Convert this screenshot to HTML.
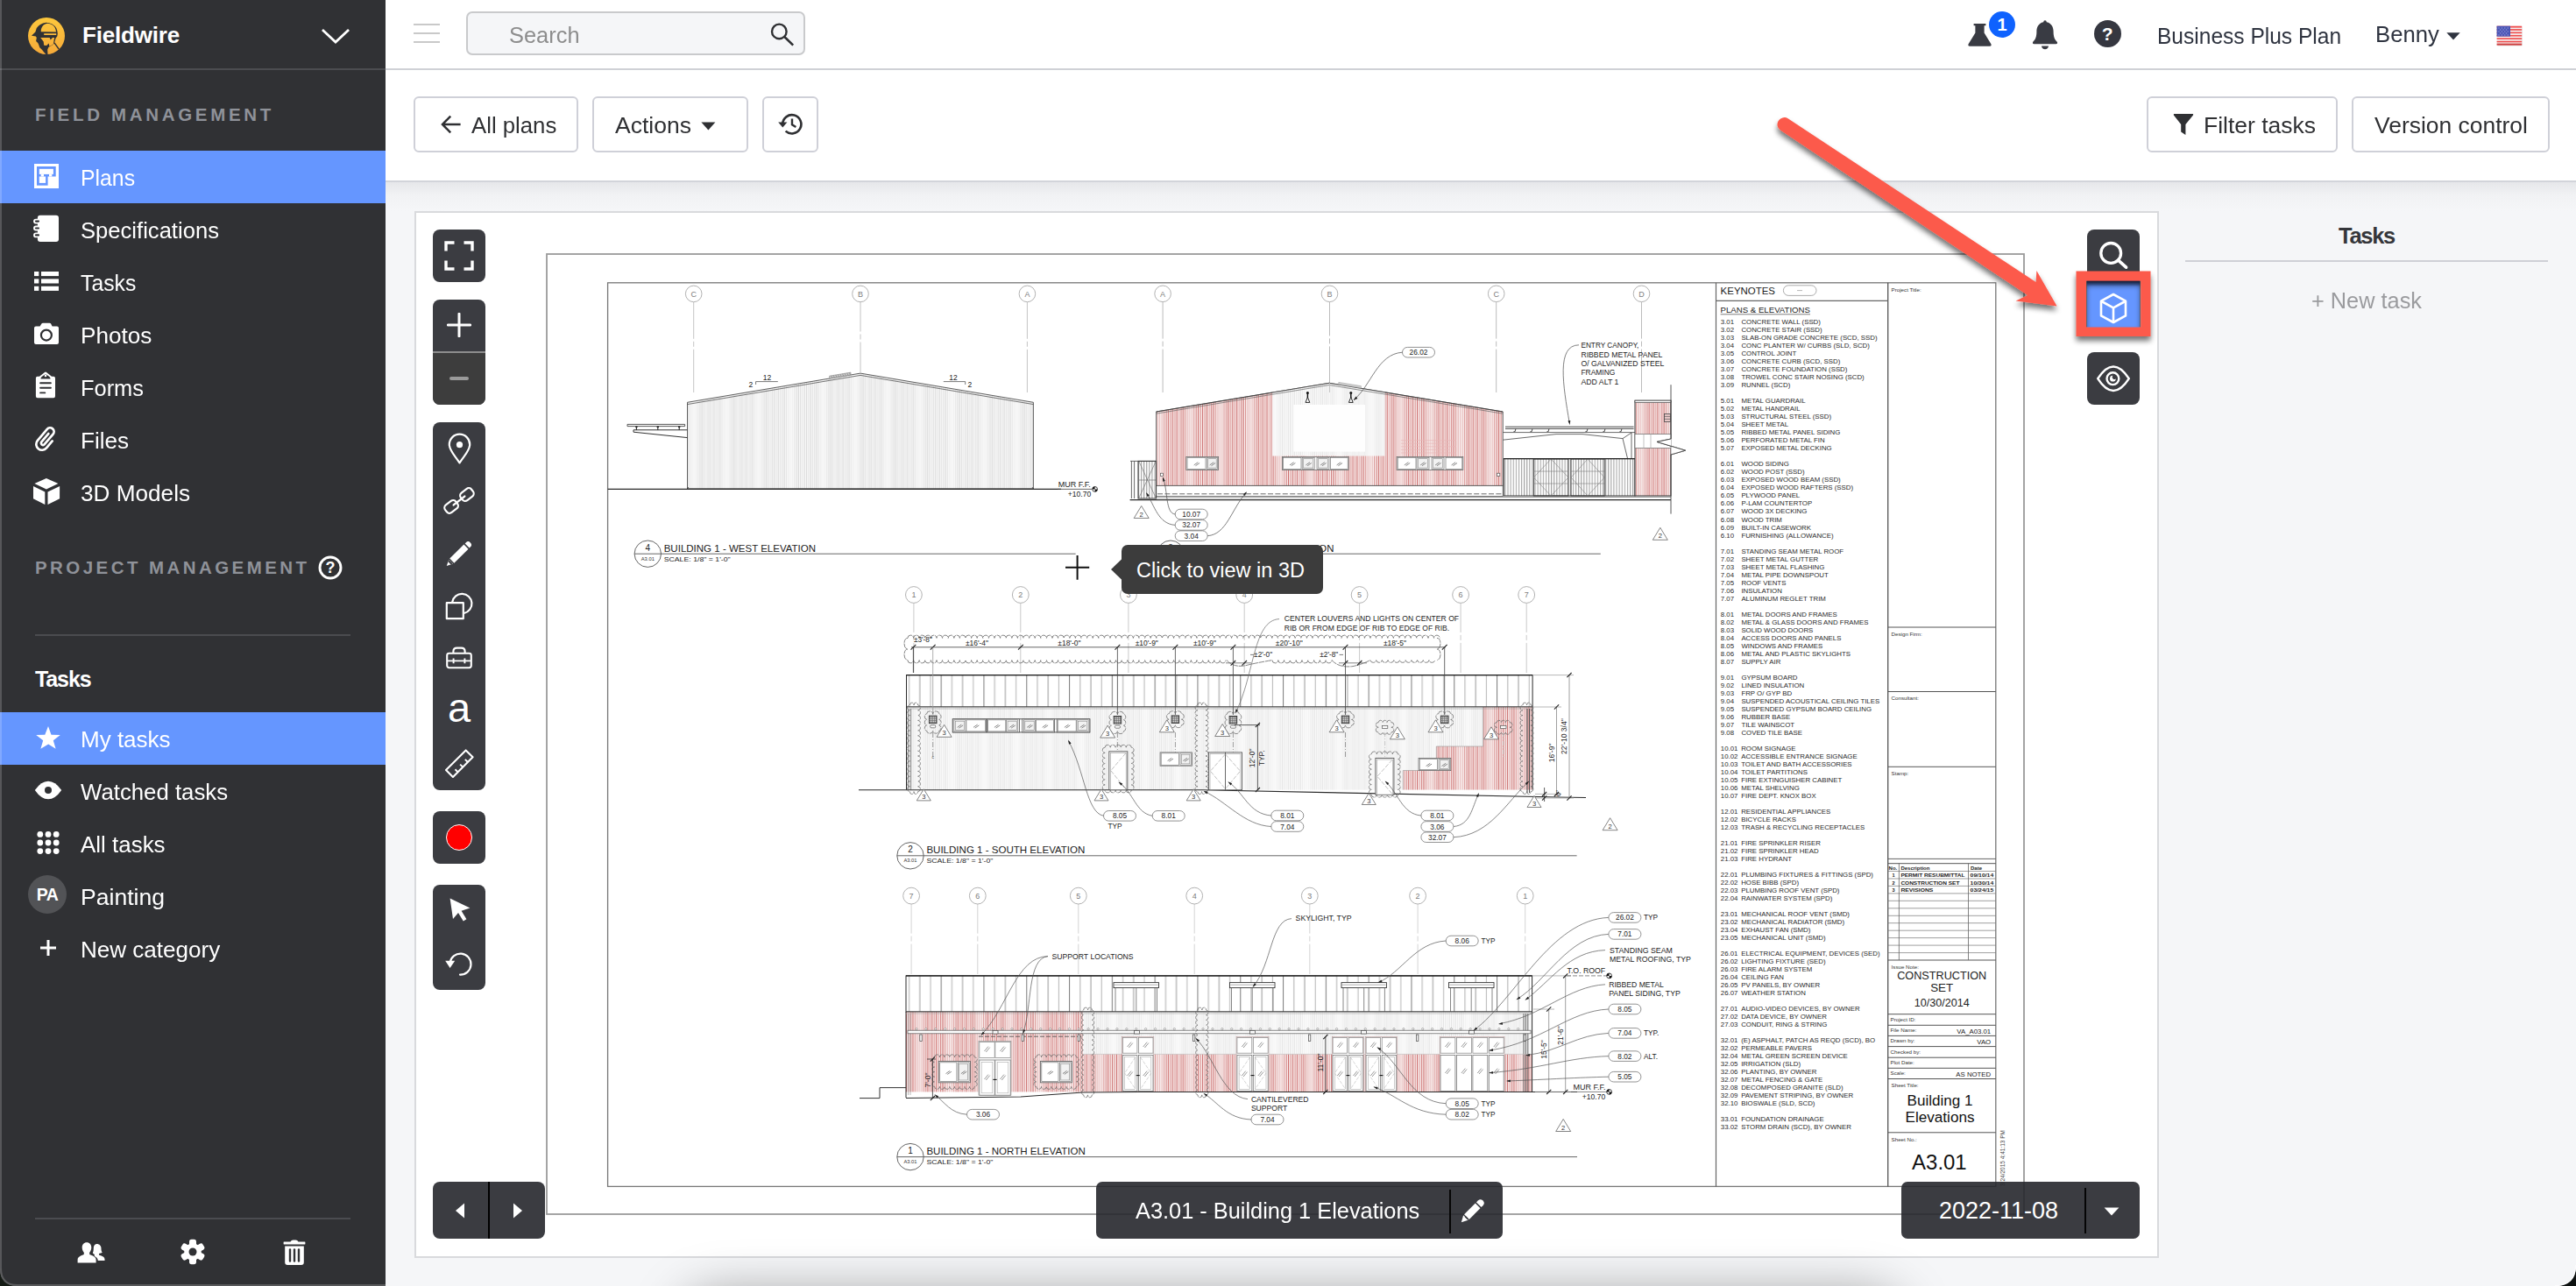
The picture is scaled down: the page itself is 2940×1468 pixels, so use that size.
<!DOCTYPE html>
<html>
<head>
<meta charset="utf-8">
<title>Fieldwire</title>
<style>
*{box-sizing:border-box;margin:0;padding:0}
html,body{width:2940px;height:1468px;overflow:hidden;background:#f5f6f8;font-family:"Liberation Sans",sans-serif;}
.abs{position:absolute}
#side{position:absolute;left:0;top:0;width:440px;height:1468px;background:#303134;color:#fff;overflow:hidden}
#side .hdrline{position:absolute;left:0;top:78px;width:440px;height:2px;background:#4b4c50}
#side .brand{position:absolute;left:94px;top:22px;font-size:26px;font-weight:bold;line-height:36px;letter-spacing:-0.2px}
.seclabel{position:absolute;left:40px;font-size:20.5px;font-weight:bold;letter-spacing:3.55px;color:#8f9299;line-height:24px;white-space:nowrap}
.row{position:absolute;left:0;width:440px;height:60px}
.row.act{background:#6596ff}
.row .t{position:absolute;left:92px;top:14.9px;font-size:26.5px;line-height:32px;white-space:nowrap;color:#fff;transform-origin:0 50%}
.row svg{position:absolute}
.sdiv{position:absolute;left:40px;width:360px;height:2px;background:#4b4c50}
#top{position:absolute;left:440px;top:0;width:2500px;height:80px;background:#fff;border-bottom:2px solid #cfd1d6}
#bar{position:absolute;left:440px;top:80px;width:2500px;height:128px;background:#fff;border-bottom:2px solid #d2d4da}
#barshadow{position:absolute;left:440px;top:208px;width:2500px;height:33px;background:linear-gradient(#e6e7ea,#f1f2f4 45%,#f5f6f8)}
.btn{position:absolute;top:110px;height:64px;border:2px solid #cfd0d8;border-radius:6px;background:#fff;color:#2f3033;font-size:26px;line-height:60px;white-space:nowrap}
.btn span{position:absolute;top:0}
#viewer{position:absolute;left:473px;top:241px;width:1991px;height:1195px;background:#fff;border:2px solid #d9dadd;overflow:hidden}
.tool{position:absolute;background:#3b3c41;border-radius:8px}
.toptxt{position:absolute;font-size:27px;color:#2f3033;line-height:34px;white-space:nowrap}
</style>
</head>
<body>
<!-- ============ SIDEBAR ============ -->
<div id="side">
  
  <!-- logo -->
  <svg class="abs" style="left:32px;top:20px" width="42" height="42" viewBox="0 0 42 42">
    <defs><linearGradient id="lg" gradientUnits="userSpaceOnUse" x1="0" y1="0" x2="0" y2="42"><stop offset="0" stop-color="#fdc83c"/><stop offset="1" stop-color="#f5a93a"/></linearGradient></defs>
    <circle cx="21" cy="21" r="21" fill="url(#lg)"/>
    <path d="M4 20.8 L8.4 16.6 L9.8 12.1 Q11.6 9.2 14 7.9 Q17 6.1 20.5 5.8 Q24.4 5.9 27.5 7.5 Q30.6 9.4 32.2 12.1 Q33.6 15 33.8 18.2 L33.4 21.2 L31.5 23.8 L30.1 28.9 L28.9 30.8 L23.3 34 L22.2 36.8 L22.5 42.3 L20.3 42 L15.9 36.8 L13.3 34.3 L12.1 30.8 L11.2 28.9 L9.1 27 L9.8 22.9 L8.9 21.5 Z" fill="#303134"/>
    <path d="M30 28.8 L35.2 36" stroke="#303134" stroke-width="1.4" fill="none"/>
    <path d="M14.7 16.3 Q14.7 13.6 15.4 12 Q16.4 9.7 17.8 8.4 Q20 7 22.4 6.8 Q25.2 6.9 27.5 8.2 Q29.6 9.6 30.8 11.7 Q31.8 14 32 16.6 Z" fill="url(#lg)"/>
    <path d="M18.2 18.2 H32.2 V20 H18.2 Z" fill="url(#lg)"/>
    <path d="M14.2 23.1 L24.7 22.9 L25.7 25.6 L28 22.9 L30.1 22.9 L29.6 25.7 L28.9 30.5 L24.5 33 L23.6 29.6 L21.2 32 L18.2 31.7 L17.7 27.5 Z" fill="url(#lg)"/>
  </svg>
  <div class="brand">Fieldwire</div>
  <svg class="abs" style="left:364px;top:30px" width="38" height="24" viewBox="0 0 38 24"><path d="M5 5 L19 18 L33 5" fill="none" stroke="#fff" stroke-width="2.8" stroke-linecap="square"/></svg>
  <div class="hdrline"></div>

  <div class="seclabel" style="top:119px;letter-spacing:3.68px">FIELD MANAGEMENT</div>

  <div class="row act" style="top:172px"><svg style="left:39px;top:15px" width="28" height="28" viewBox="0 0 28 28"><rect width="28" height="28" fill="#fff"/><rect x="3" y="3" width="21.7" height="21.7" fill="#6596ff"/><rect x="5.8" y="5.8" width="16.1" height="6.1" fill="#fff"/><rect x="7.7" y="11.9" width="3.3" height="2.6" fill="#fff"/><rect x="17" y="11.9" width="3.3" height="2.6" fill="#fff"/><rect x="5.8" y="14.5" width="7.3" height="7.4" fill="#fff"/><rect x="15.6" y="14.5" width="12.4" height="13.5" fill="#fff"/></svg><div class="t" style="transform:scaleX(0.936)">Plans</div></div>
  <div class="row" style="top:232px"><svg style="left:37px;top:12px" width="32" height="34" viewBox="0 0 32 34"><rect x="5.9" y="1.8" width="24.1" height="30.1" rx="3" fill="#fff"/><g fill="#303134" stroke="#fff" stroke-width="1.9"><rect x="2" y="6.6" width="7" height="4" rx="2"/><rect x="2" y="14.5" width="7" height="4" rx="2"/><rect x="2" y="22.4" width="7" height="4" rx="2"/></g></svg><div class="t" style="transform:scaleX(0.966)">Specifications</div></div>
  <div class="row" style="top:292px"><svg style="left:39px;top:18px" width="28" height="22" viewBox="0 0 28 22" fill="#fff"><rect x="0" y="0" width="5.3" height="5.1"/><rect x="8" y="0" width="20" height="5.1"/><rect x="0" y="8.4" width="5.3" height="5.1"/><rect x="8" y="8.4" width="20" height="5.1"/><rect x="0" y="16.8" width="5.3" height="5.1"/><rect x="8" y="16.8" width="20" height="5.1"/></svg><div class="t" style="transform:scaleX(0.934)">Tasks</div></div>
  <div class="row" style="top:352px"><svg style="left:39px;top:16px" width="28" height="26" viewBox="0 0 28 26"><path d="M2 4.5 H6.6 L8.4 1.6 Q8.9 0.8 9.9 0.8 H17.6 Q18.6 0.8 19.1 1.6 L20.6 4.5 H26 Q28 4.5 28 6.5 V23 Q28 25 26 25 H2 Q0 25 0 23 V6.5 Q0 4.5 2 4.5 Z" fill="#fff"/><circle cx="13.9" cy="14.6" r="6" fill="#fff" stroke="#303134" stroke-width="2.2"/></svg><div class="t" style="transform:scaleX(0.986)">Photos</div></div>
  <div class="row" style="top:412px"><svg style="left:40px;top:12px" width="24" height="32" viewBox="0 0 24 32"><path d="M0.9 7.7 Q0.9 5.8 2.8 5.8 H5 L11 0.9 Q12 0.2 13 0.9 L19 5.8 H21.1 Q23 5.8 23 7.7 V28.3 Q23 30.2 21.1 30.2 H2.8 Q0.9 30.2 0.9 28.3 Z" fill="#fff"/><path d="M6.4 8.6 Q6.4 6.8 8 5.8 L12 2.9 L16 5.8 Q17.6 6.8 17.6 8.6 Z" fill="#303134"/><circle cx="12" cy="4.9" r="1.3" fill="#fff"/><g stroke="#303134" stroke-width="1.9" stroke-linecap="round"><path d="M6.1 13.2 H17.9"/><path d="M6.1 18.8 H17.9"/><path d="M6.1 24.4 H11.3"/></g></svg><div class="t" style="transform:scaleX(0.958)">Forms</div></div>
  <div class="row" style="top:472px"><svg style="left:38px;top:14px" width="30" height="32" viewBox="0 0 30 32"><g transform="translate(14.7,15.5) rotate(40)" fill="none" stroke="#fff" stroke-width="2.7" stroke-linecap="round"><path d="M6.6 -3 V7.4 A6.6 6.6 0 0 1 -6.6 7.4 V-9.6 A4.4 4.4 0 0 1 2.2 -9.6 V5.6 A2.2 2.2 0 0 1 -2.2 5.6 V-6.6"/></g></svg><div class="t" style="transform:scaleX(0.986)">Files</div></div>
  <div class="row" style="top:532px"><svg style="left:36px;top:12px" width="34" height="34" viewBox="0 0 34 34" fill="#fff"><path d="M16.9 2 L30.4 8.1 L16.9 14.4 L3.4 8.1 Z"/><path d="M2 11.1 L15.3 17.4 V32.1 L2 25.3 Z"/><path d="M18.5 17.4 L32.1 11.1 V25.3 L18.5 32.1 Z"/></svg><div class="t" style="transform:scaleX(0.987)">3D Models</div></div>

  <div class="seclabel" style="top:636px;letter-spacing:3.43px">PROJECT MANAGEMENT</div>
  <div class="sdiv" style="top:724px"></div>
  <div class="abs" style="left:40px;top:758px;font-size:25px;font-weight:bold;line-height:34px;letter-spacing:-1.1px">Tasks</div>

  <div class="row act" style="top:813px"><svg style="left:40px;top:15px" width="30" height="28" viewBox="0 0 30 28"><path d="M15 1.1 L18.5 10.7 L28.8 10.9 L20.8 17.2 L23.6 26.8 L15.2 21.4 L6.4 26.8 L9.2 17.2 L1.2 10.9 L11.3 10.7 Z" fill="#fff"/></svg><div class="t" style="transform:scaleX(0.981)">My tasks</div></div>
  <div class="row" style="top:873px"><svg style="left:38px;top:17px" width="34" height="24" viewBox="0 0 34 24"><path d="M1.8 11.9 Q9 1.7 17 1.7 Q25 1.7 32.2 11.9 Q25 22.2 17 22.2 Q9 22.2 1.8 11.9 Z" fill="#fff"/><circle cx="17" cy="11.9" r="4" fill="#303134"/></svg><div class="t" style="transform:scaleX(0.973)">Watched tasks</div></div>
  <div class="row" style="top:933px"><svg style="left:41px;top:15px" width="28" height="28" viewBox="0 0 28 28" fill="#fff"><circle cx="4.8" cy="4.4" r="3.4"/><circle cx="14" cy="4.4" r="3.4"/><circle cx="23.2" cy="4.4" r="3.4"/><circle cx="4.8" cy="14" r="3.4"/><circle cx="14" cy="14" r="3.4"/><circle cx="23.2" cy="14" r="3.4"/><circle cx="4.8" cy="23.6" r="3.4"/><circle cx="14" cy="23.6" r="3.4"/><circle cx="23.2" cy="23.6" r="3.4"/></svg><div class="t" style="transform:scaleX(0.979)">All tasks</div></div>
  <div class="row" style="top:993px"><div class="abs" style="left:32px;top:6px;width:44px;height:44px;border-radius:22px;background:#525356;color:#fff;font-weight:bold;font-size:19.5px;line-height:44px;text-align:center;letter-spacing:-0.5px">PA</div><div class="t" style="transform:scaleX(1.003)">Painting</div></div>
  <div class="row" style="top:1053px"><svg style="left:45px;top:19px" width="20" height="20" viewBox="0 0 20 20"><path d="M10 1 V19 M1 10 H19" stroke="#fff" stroke-width="3" fill="none"/></svg><div class="t" style="transform:scaleX(0.983)">New category</div></div>

  <div class="sdiv" style="top:1390px"></div>

  <svg class="abs" style="left:362px;top:633px" width="30" height="30" viewBox="0 0 30 30"><circle cx="15" cy="15" r="12" fill="none" stroke="#fff" stroke-width="2.9"/><text x="15" y="21.3" font-family="Liberation Sans" font-weight="bold" font-size="18" fill="#fff" text-anchor="middle">?</text></svg>
  <!-- bottom icons -->
  <svg class="abs" style="left:88px;top:1417px" width="33" height="26" viewBox="0 0 33 26" fill="#fff"><path d="M22.5 3 C25.5 3 27.5 5.2 27.5 8.2 C27.5 10 27.8 11.8 28.8 12.8 C27.6 13.6 26.2 13.9 25 13.9 L25 15.5 C27.5 16.6 31.5 17.2 31.5 20.5 L31.5 22 L23.8 22 C23.6 19.2 21.6 17.9 19.8 17.1 L19.8 15 C19 14.6 18.2 14 17.8 13.2 C19 11.8 18.6 8.6 18.9 6.6 C19.4 4.4 20.6 3 22.5 3 Z"/><path d="M11 1.3 C14.3 1.3 16.3 3.8 16.3 7 C16.3 9 15.6 11.4 14.2 12.7 L14.2 15 C17.5 16.4 21.6 17.4 21.6 21 L21.6 24.4 L0.6 24.4 L0.6 21 C0.6 17.4 4.6 16.4 7.8 15 L7.8 12.7 C6.4 11.4 5.7 9 5.7 7 C5.7 3.8 7.7 1.3 11 1.3 Z"/></svg>
  <svg class="abs" style="left:205px;top:1414px" width="30" height="30" viewBox="-15 -15 30 30"><g fill="#fff"><circle r="9.8"/><rect x="-4" y="-14.2" width="8" height="8" rx="2.6" transform="rotate(0)"/><rect x="-4" y="-14.2" width="8" height="8" rx="2.6" transform="rotate(60)"/><rect x="-4" y="-14.2" width="8" height="8" rx="2.6" transform="rotate(120)"/><rect x="-4" y="-14.2" width="8" height="8" rx="2.6" transform="rotate(180)"/><rect x="-4" y="-14.2" width="8" height="8" rx="2.6" transform="rotate(240)"/><rect x="-4" y="-14.2" width="8" height="8" rx="2.6" transform="rotate(300)"/></g><circle r="4.5" fill="#303134"/></svg>
  <svg class="abs" style="left:323px;top:1414px" width="26" height="32" viewBox="0 0 26 32"><path d="M1 3.6 H8.5 Q9.5 1.4 11.5 1.4 H14.5 Q16.5 1.4 17.5 3.6 H25 Q25.4 3.6 25.4 4.4 V5.8 Q25.4 6.6 25 6.6 H1 Q0.6 6.6 0.6 5.8 V4.4 Q0.6 3.6 1 3.6 Z" fill="#fff"/><path d="M2.2 8.4 H23.8 V27 Q23.8 30 20.8 30 H5.2 Q2.2 30 2.2 27 Z" fill="#fff"/><g stroke="#303134" stroke-width="2.4" stroke-linecap="round"><path d="M8 12.5 V25.5"/><path d="M13 12.5 V25.5"/><path d="M18 12.5 V25.5"/></g></svg>
  <div class="abs" style="left:0;top:1466px;width:440px;height:2px;background:#58595b"></div>
  <div class="abs" style="left:0;top:0;width:2px;height:1468px;background:rgba(255,255,255,0.19)"></div>
</div>

<!-- ============ TOP BAR ============ -->
<div id="top">
  <!-- hamburger -->
  <div class="abs" style="left:32px;top:27px;width:30px;height:2px;background:#c9c9c9"></div>
  <div class="abs" style="left:32px;top:37px;width:30px;height:2px;background:#c9c9c9"></div>
  <div class="abs" style="left:32px;top:47px;width:30px;height:2px;background:#c9c9c9"></div>
  <!-- search -->
  <div class="abs" style="left:92px;top:13px;width:387px;height:50px;border:2px solid #c9cacc;border-radius:7px;background:#f5f6f8"></div>
  <div class="abs" style="left:141.4px;top:22.9px;font-size:26.5px;line-height:34px;color:#8d8d8d;transform:scaleX(0.959);transform-origin:0 50%;white-space:nowrap">Search</div>
  <svg class="abs" style="left:436px;top:22px" width="34" height="34" viewBox="0 0 34 34"><circle cx="13.3" cy="13.9" r="8.3" fill="none" stroke="#2f3033" stroke-width="2.4"/><path d="M19.3 20 L29.2 29.6" stroke="#2f3033" stroke-width="2.6" stroke-linecap="butt"/></svg>
  <!-- flask -->
  <svg class="abs" style="left:1806px;top:26px" width="28" height="28" viewBox="0 0 28 28"><path d="M6.6 1 H20.4 V3.2 H18.6 V11.5 L26.4 24.2 Q27.4 26.8 24.6 26.8 H2.4 Q-0.4 26.8 0.6 24.2 L8.4 11.5 V3.2 H6.6 Z" fill="#393b43"/></svg>
  <div class="abs" style="left:1830px;top:13px;width:30px;height:30px;border-radius:15px;background:#0f62fe;color:#fff;font-weight:bold;font-size:20px;line-height:30px;text-align:center">1</div>
  <!-- bell -->
  <svg class="abs" style="left:1878px;top:22px" width="32" height="36" viewBox="0 0 32 36"><path d="M16 1.2 Q17.8 1.2 17.8 3.2 C23.5 4.4 25.6 9 25.6 14 C25.6 20 27 23.4 30 26 Q30.6 28.2 28.6 28.2 H3.4 Q1.4 28.2 2 26 C5 23.4 6.4 20 6.4 14 C6.4 9 8.5 4.4 14.2 3.2 Q14.2 1.2 16 1.2 Z" fill="#393b43"/><path d="M12 30.4 H20 Q19.4 34.2 16 34.2 Q12.600000000000001 34.2 12 30.4 Z" fill="#393b43"/></svg>
  <!-- help -->
  <div class="abs" style="left:1950px;top:23px;width:30.5px;height:30.5px;border-radius:16px;background:#353740;color:#fff;font-weight:bold;font-size:21px;line-height:31px;text-align:center">?</div>
  <div class="toptxt" style="left:2021.7px;top:24.3px;font-size:26.5px;transform:scaleX(0.926);transform-origin:0 50%;color:#2f3440">Business Plus Plan</div>
  <div class="toptxt" style="left:2270.5px;top:21.5px;font-size:26.5px;transform:scaleX(0.969);transform-origin:0 50%;color:#2f3440">Benny</div>
  <svg class="abs" style="left:2352px;top:37px" width="16" height="9" viewBox="0 0 16 9"><path d="M0.3 0.3 H15.7 L8 8.4 Z" fill="#2f3440"/></svg>
  <!-- flag -->
  <svg class="abs" style="left:2408px;top:28px" width="32" height="26" viewBox="0 0 32 26">
    <rect x="2.2" y="2.6" width="28.4" height="22" rx="1" fill="#00000022"/>
    <rect x="1.6" y="1.7" width="28.6" height="22" fill="#f4f4f4"/>
    <g fill="#ef4f4f"><rect x="1.6" y="1.7" width="28.6" height="1.9"/><rect x="1.6" y="5.1" width="28.6" height="1.7"/><rect x="1.6" y="8.5" width="28.6" height="1.7"/><rect x="1.6" y="11.9" width="28.6" height="1.7"/><rect x="1.6" y="15.3" width="28.6" height="1.7"/><rect x="1.6" y="18.7" width="28.6" height="1.7"/><rect x="1.6" y="21.6" width="28.6" height="2.1" fill="#cf4141"/></g>
    <rect x="1.6" y="1.7" width="15.4" height="11.9" fill="#4a55b5"/>
    <g fill="#8a92d6"><circle cx="4" cy="4" r="0.8"/><circle cx="7.4" cy="4" r="0.8"/><circle cx="10.8" cy="4" r="0.8"/><circle cx="14.2" cy="4" r="0.8"/><circle cx="5.7" cy="6" r="0.8"/><circle cx="9.1" cy="6" r="0.8"/><circle cx="12.5" cy="6" r="0.8"/><circle cx="4" cy="8" r="0.8"/><circle cx="7.4" cy="8" r="0.8"/><circle cx="10.8" cy="8" r="0.8"/><circle cx="14.2" cy="8" r="0.8"/><circle cx="5.7" cy="10" r="0.8"/><circle cx="9.1" cy="10" r="0.8"/><circle cx="12.5" cy="10" r="0.8"/><circle cx="4" cy="12" r="0.8"/><circle cx="7.4" cy="12" r="0.8"/><circle cx="10.8" cy="12" r="0.8"/><circle cx="14.2" cy="12" r="0.8"/></g>
  </svg>
</div>
<div id="bar"></div>
<div class="btn" style="left:472px;width:188px"><svg class="abs" style="left:29px;top:19px" width="24" height="22" viewBox="0 0 24 22"><path d="M11.2 1.6 L2 11 L11.2 20.4 M2.4 11 H22.6" fill="none" stroke="#2f3033" stroke-width="2.5"/></svg><span style="left:64.2px;top:0.7px;font-size:26.5px;transform:scaleX(0.9715);transform-origin:0 50%">All plans</span></div>
<div class="btn" style="left:676px;width:178px"><span style="left:24.4px;top:0.7px;font-size:26.5px;transform:scaleX(1.002);transform-origin:0 50%">Actions</span><svg class="abs" style="left:122px;top:27px" width="17" height="10" viewBox="0 0 17 10"><path d="M0.4 0.4 H16.4 L8.4 9.4 Z" fill="#2f3033"/></svg></div>
<div class="btn" style="left:870px;width:64px"><svg class="abs" style="left:15px;top:15px" width="30" height="30" viewBox="0 0 30 30"><path d="M6.2 14.6 A10.6 10.6 0 1 1 9.6 22.6" fill="none" stroke="#2f3033" stroke-width="2.6"/><path d="M1.2 12.6 H11.4 L6.3 18.6 Z" fill="#2f3033"/><path d="M17 8.6 V15.4 L21.4 18" fill="none" stroke="#2f3033" stroke-width="2.4"/></svg></div>
<div class="btn" style="left:2450px;width:218px"><svg class="abs" style="left:28px;top:17px" width="24" height="28" viewBox="0 0 24 28"><path d="M1.2 1 H22.8 Q23.6 1.6 23 2.6 L14.4 13 V25 L9.2 21.4 V13 L0.9 2.6 Q0.4 1.6 1.2 1 Z" fill="#2f3033"/></svg><span style="left:63.3px;top:0.7px;font-size:26.5px;transform:scaleX(0.9997);transform-origin:0 50%">Filter tasks</span></div>
<div class="btn" style="left:2684px;width:226px"><span style="left:23.8px;top:0.7px;font-size:26.5px;transform:scaleX(0.998);transform-origin:0 50%">Version control</span></div>
<div id="barshadow"></div>

<!-- ============ VIEWER ============ -->
<div id="viewer"></div>
<!--DRAWING_START--><svg class="abs" style="left:475px;top:243px" width="1987" height="1190" viewBox="475 243 1987 1190" font-family="Liberation Sans, sans-serif" fill="#222" stroke="none"><g><defs><pattern id="hp" width="34.3" height="10" patternUnits="userSpaceOnUse"><rect width="34.3" height="10" fill="#faf0f0"/><path d="M0.6 0V10" stroke="#bd4745" stroke-width="1" stroke-opacity="0.8"/><path d="M3.1 0V10" stroke="#bd4745" stroke-width="1" stroke-opacity="0.62"/><path d="M5.5 0V10" stroke="#bd4745" stroke-width="1" stroke-opacity="0.85"/><path d="M8 0V10" stroke="#bd4745" stroke-width="1" stroke-opacity="0.5"/><path d="M10.4 0V10" stroke="#bd4745" stroke-width="1" stroke-opacity="0.72"/><path d="M12.8 0V10" stroke="#bd4745" stroke-width="1" stroke-opacity="0.9"/><path d="M15.3 0V10" stroke="#bd4745" stroke-width="1" stroke-opacity="0.6"/><path d="M17.8 0V10" stroke="#bd4745" stroke-width="1" stroke-opacity="0.42"/><path d="M20.2 0V10" stroke="#bd4745" stroke-width="1" stroke-opacity="0.3"/><path d="M22.7 0V10" stroke="#bd4745" stroke-width="1" stroke-opacity="0.36"/><path d="M25.1 0V10" stroke="#bd4745" stroke-width="1" stroke-opacity="0.55"/><path d="M27.6 0V10" stroke="#bd4745" stroke-width="1" stroke-opacity="0.75"/><path d="M30 0V10" stroke="#bd4745" stroke-width="1" stroke-opacity="0.85"/><path d="M32.5 0V10" stroke="#bd4745" stroke-width="1" stroke-opacity="0.62"/></pattern><pattern id="hg" width="36.8" height="10" patternUnits="userSpaceOnUse"><rect width="36.8" height="10" fill="#f9f9f9"/><path d="M0.6 0V10" stroke="#8f8f8f" stroke-width="1" stroke-opacity="0.3"/><path d="M2.9 0V10" stroke="#8f8f8f" stroke-width="1" stroke-opacity="0.22"/><path d="M5.2 0V10" stroke="#8f8f8f" stroke-width="1" stroke-opacity="0.34"/><path d="M7.5 0V10" stroke="#8f8f8f" stroke-width="1" stroke-opacity="0.2"/><path d="M9.8 0V10" stroke="#8f8f8f" stroke-width="1" stroke-opacity="0.27"/><path d="M12.1 0V10" stroke="#8f8f8f" stroke-width="1" stroke-opacity="0.34"/><path d="M14.4 0V10" stroke="#8f8f8f" stroke-width="1" stroke-opacity="0.2"/><path d="M16.7 0V10" stroke="#8f8f8f" stroke-width="1" stroke-opacity="0.12"/><path d="M19 0V10" stroke="#8f8f8f" stroke-width="1" stroke-opacity="0.07"/><path d="M21.3 0V10" stroke="#8f8f8f" stroke-width="1" stroke-opacity="0.09"/><path d="M23.6 0V10" stroke="#8f8f8f" stroke-width="1" stroke-opacity="0.2"/><path d="M25.9 0V10" stroke="#8f8f8f" stroke-width="1" stroke-opacity="0.3"/><path d="M28.2 0V10" stroke="#8f8f8f" stroke-width="1" stroke-opacity="0.34"/><path d="M30.5 0V10" stroke="#8f8f8f" stroke-width="1" stroke-opacity="0.27"/><path d="M32.8 0V10" stroke="#8f8f8f" stroke-width="1" stroke-opacity="0.2"/><path d="M35.1 0V10" stroke="#8f8f8f" stroke-width="1" stroke-opacity="0.28"/></pattern><pattern id="hl" width="36.8" height="10" patternUnits="userSpaceOnUse"><rect width="36.8" height="10" fill="#fbfbfb"/><path d="M0.6 0V10" stroke="#9a9a9a" stroke-width="1" stroke-opacity="0.26"/><path d="M2.9 0V10" stroke="#9a9a9a" stroke-width="1" stroke-opacity="0.2"/><path d="M5.2 0V10" stroke="#9a9a9a" stroke-width="1" stroke-opacity="0.28"/><path d="M7.5 0V10" stroke="#9a9a9a" stroke-width="1" stroke-opacity="0.17"/><path d="M9.8 0V10" stroke="#9a9a9a" stroke-width="1" stroke-opacity="0.22"/><path d="M12.1 0V10" stroke="#9a9a9a" stroke-width="1" stroke-opacity="0.28"/><path d="M14.4 0V10" stroke="#9a9a9a" stroke-width="1" stroke-opacity="0.17"/><path d="M16.7 0V10" stroke="#9a9a9a" stroke-width="1" stroke-opacity="0.1"/><path d="M19 0V10" stroke="#9a9a9a" stroke-width="1" stroke-opacity="0.06"/><path d="M21.3 0V10" stroke="#9a9a9a" stroke-width="1" stroke-opacity="0.08"/><path d="M23.6 0V10" stroke="#9a9a9a" stroke-width="1" stroke-opacity="0.17"/><path d="M25.9 0V10" stroke="#9a9a9a" stroke-width="1" stroke-opacity="0.26"/><path d="M28.2 0V10" stroke="#9a9a9a" stroke-width="1" stroke-opacity="0.28"/><path d="M30.5 0V10" stroke="#9a9a9a" stroke-width="1" stroke-opacity="0.22"/><path d="M32.8 0V10" stroke="#9a9a9a" stroke-width="1" stroke-opacity="0.17"/><path d="M35.1 0V10" stroke="#9a9a9a" stroke-width="1" stroke-opacity="0.24"/></pattern><pattern id="hf" width="3.1" height="10" patternUnits="userSpaceOnUse"><rect width="3.1" height="10" fill="#fff"/><path d="M0.6 0V10" stroke="#5a5a5a" stroke-width="0.8" stroke-opacity="0.75"/></pattern><pattern id="hr" width="48.8" height="10" patternUnits="userSpaceOnUse"><rect width="48.8" height="10" fill="#fff"/><path d="M0.6 0V10" stroke="#6a6a6a" stroke-width="1" stroke-opacity="0.9"/><path d="M12.8 0V10" stroke="#6a6a6a" stroke-width="1" stroke-opacity="0.55"/><path d="M25 0V10" stroke="#6a6a6a" stroke-width="1" stroke-opacity="0.7"/><path d="M37.2 0V10" stroke="#6a6a6a" stroke-width="1" stroke-opacity="0.5"/></pattern><pattern id="lv" width="2" height="2" patternUnits="userSpaceOnUse"><rect width="2" height="2" fill="#d4d4d4"/><path d="M0 0.5H2M0.5 0V2" stroke="#666" stroke-width="0.6"/></pattern></defs><rect x="624" y="290" width="1686" height="1096" stroke="#9b9b9b" stroke-width="1.8" fill="#fff"/><rect x="693.6" y="322.8" width="1584.2" height="1031.6" stroke="#777" stroke-width="1.3" fill="none"/><path d="M1958.5 322.8L1958.5 1354.4" stroke="#666" stroke-width="1.2"/><path d="M2154.7 322.8L2154.7 1354.4" stroke="#555" stroke-width="1.3"/><path d="M1958.5 343.4L2154.7 343.4" stroke="#666" stroke-width="1.1"/><path d="M791.7 344.8V448" stroke="#bdbdbd" stroke-width="0.9" stroke-dasharray="42 3 6 3 200"/><circle cx="791.7" cy="335.4" r="9.3" fill="#fff" stroke="#a9a9a9" stroke-width="0.9"/><text x="791.7" y="338.6" font-size="9" text-anchor="middle" fill="#7d7d7d">C</text><path d="M982 344.8V425" stroke="#bdbdbd" stroke-width="0.9" stroke-dasharray="33.7 3 6 3 200"/><circle cx="982" cy="335.4" r="9.3" fill="#fff" stroke="#a9a9a9" stroke-width="0.9"/><text x="982" y="338.6" font-size="9" text-anchor="middle" fill="#7d7d7d">B</text><path d="M1172.4 344.8V448" stroke="#bdbdbd" stroke-width="0.9" stroke-dasharray="42 3 6 3 200"/><circle cx="1172.4" cy="335.4" r="9.3" fill="#fff" stroke="#a9a9a9" stroke-width="0.9"/><text x="1172.4" y="338.6" font-size="9" text-anchor="middle" fill="#7d7d7d">A</text><path d="M784.5 459.3L982 426.1L1179.4 459.3V557.9H784.5Z" stroke="#444" stroke-width="0.85" fill="url(#hg)"/><path d="M784.5 461.6L982 428.4L1179.4 461.6" stroke="#555" stroke-width="0.8" fill="none"/><path d="M784.5 557.9l1.2 -1.6M1179.4 557.9l-1.2 -1.6" stroke="#333" stroke-width="1" fill="none"/><path d="M693.6 558.4L1211 558.4" stroke="#2a2a2a" stroke-width="1.1"/><path d="M716 484.4H781.6M716 486.6H781.6M716 484.4V486.6M781.6 484.4V486.6" stroke="#444" stroke-width="0.9" fill="none"/><path d="M723 490.8H784.5M723 490.8V493.2L784.5 499.6" stroke="#333" stroke-width="1" fill="none"/><path d="M726.4 486.6V490.8M725.2 487.4h2.4" stroke="#222" stroke-width="1.1" fill="none"/><path d="M750.8 486.6V490.8M749.6 487.4h2.4" stroke="#222" stroke-width="1.1" fill="none"/><path d="M775.2 486.6V490.8M774 487.4h2.4" stroke="#222" stroke-width="1.1" fill="none"/><text x="875.6" y="434.2" font-size="8.5" text-anchor="middle">12</text><path d="M862.6 439V435.6H887.8" stroke="#555" stroke-width="0.8" fill="none"/><text x="856.8" y="441.6" font-size="8.5" text-anchor="middle">2</text><text x="1088" y="434.2" font-size="8.5" text-anchor="middle">12</text><path d="M1076.8 435.6H1101.7V439" stroke="#555" stroke-width="0.8" fill="none"/><text x="1106.8" y="441.6" font-size="8.5" text-anchor="middle">2</text><path d="M946.6 429.2L971 425.1V427.9L946.6 432Z" stroke="#888" stroke-width="0.6" fill="#ccc"/><path d="M948.6 428.8L949.6 431.2" stroke="#777" stroke-width="0.6"/><path d="M951.2 428.4L952.2 430.8" stroke="#777" stroke-width="0.6"/><path d="M953.8 427.9L954.8 430.3" stroke="#777" stroke-width="0.6"/><path d="M956.4 427.5L957.4 429.9" stroke="#777" stroke-width="0.6"/><path d="M959 427.1L960 429.5" stroke="#777" stroke-width="0.6"/><path d="M961.6 426.7L962.6 429.1" stroke="#777" stroke-width="0.6"/><path d="M964.2 426.2L965.2 428.6" stroke="#777" stroke-width="0.6"/><path d="M966.8 425.8L967.8 428.2" stroke="#777" stroke-width="0.6"/><path d="M969.4 425.4L970.4 427.8" stroke="#777" stroke-width="0.6"/><text x="1244.8" y="555.6" font-size="8.4" text-anchor="end" textLength="37" lengthAdjust="spacingAndGlyphs">MUR F.F.</text><text x="1245.2" y="566.8" font-size="8.4" text-anchor="end" textLength="26.4" lengthAdjust="spacingAndGlyphs">+10.70</text><path d="M1207 558.4L1246 558.4" stroke="#444" stroke-width="0.8"/><circle cx="1249.6" cy="558.4" r="2.9" fill="#fff" stroke="#111" stroke-width="0.8"/><path d="M1249.6 558.4V555.5A2.9 2.9 0 0 0 1246.7 558.4ZM1249.6 558.4V561.3A2.9 2.9 0 0 0 1252.5 558.4Z" fill="#111"/><circle cx="739.3" cy="632.2" r="15.2" fill="#fff" stroke="#555" stroke-width="0.9"/><path d="M724.1 632.2L1227.6 632.2" stroke="#555" stroke-width="0.9"/><text x="739.3" y="628.6" font-size="10" text-anchor="middle">4</text><text x="739.3" y="639.8" font-size="5.8" text-anchor="middle" fill="#333">A3.01</text><text x="757.7" y="629.7" font-size="11.4" textLength="173.4" lengthAdjust="spacingAndGlyphs">BUILDING 1 - WEST ELEVATION</text><text x="757.7" y="640.8" font-size="7.4" textLength="76" lengthAdjust="spacingAndGlyphs">SCALE:  1/8" = 1'-0"</text><path d="M1327.1 344.6V448" stroke="#b4b4b4" stroke-width="0.9" stroke-dasharray="42 3 6 3 200"/><circle cx="1327.1" cy="335.3" r="9.3" fill="#fff" stroke="#a9a9a9" stroke-width="0.9"/><text x="1327.1" y="338.5" font-size="9" text-anchor="middle" fill="#7d7d7d">A</text><path d="M1517.5 344.6V437" stroke="#b4b4b4" stroke-width="0.9" stroke-dasharray="38.8 3 6 3 200"/><circle cx="1517.5" cy="335.3" r="9.3" fill="#fff" stroke="#a9a9a9" stroke-width="0.9"/><text x="1517.5" y="338.5" font-size="9" text-anchor="middle" fill="#7d7d7d">B</text><path d="M1707.7 344.6V448" stroke="#b4b4b4" stroke-width="0.9" stroke-dasharray="42 3 6 3 200"/><circle cx="1707.7" cy="335.3" r="9.3" fill="#fff" stroke="#a9a9a9" stroke-width="0.9"/><text x="1707.7" y="338.5" font-size="9" text-anchor="middle" fill="#7d7d7d">C</text><path d="M1873.5 344.6V448" stroke="#b4b4b4" stroke-width="0.9" stroke-dasharray="42 3 6 3 200"/><circle cx="1873.5" cy="335.3" r="9.3" fill="#fff" stroke="#a9a9a9" stroke-width="0.9"/><text x="1873.5" y="338.5" font-size="9" text-anchor="middle" fill="#7d7d7d">D</text><path d="M1319.6 470L1517 437.3L1715.2 470V554.4H1319.6Z" stroke="#444" stroke-width="0.85" fill="url(#hp)"/><path d="M1452.2 448L1517 437.3L1580.7 447.8V520.4H1452.2Z" stroke="none" stroke-width="0" fill="url(#hl)"/><rect x="1476.3" y="462" width="81.7" height="53.6" stroke="none" stroke-width="0" fill="#fefefe"/><path d="M1319.6 472.2L1517 439.5L1715.2 472.2" stroke="#666" stroke-width="0.7" fill="none"/><path d="M1319.6 470L1517 437.3L1715.2 470" stroke="#3a3a3a" stroke-width="0.85" fill="none"/><path d="M1517.5 437L1517.5 448" stroke="#bbb" stroke-width="0.8"/><circle cx="1492.4" cy="448.6" r="1.5" fill="#111"/><path d="M1492.4 449.5V454" stroke="#111" stroke-width="1.4" fill="none"/><path d="M1492.4 453.4L1490 459.4H1494.8Z" stroke="#111" stroke-width="0.9" fill="#fff"/><circle cx="1541.8" cy="448.6" r="1.5" fill="#111"/><path d="M1541.8 449.5V454" stroke="#111" stroke-width="1.4" fill="none"/><path d="M1541.8 453.4L1539.4 459.4H1544.2Z" stroke="#111" stroke-width="0.9" fill="#fff"/><path d="M1527.8 436.4L1553.4 440.6V443L1527.8 438.8Z" stroke="#999" stroke-width="0.5" fill="#cfcfcf"/><rect x="1319.6" y="554.4" width="395.6" height="12.2" stroke="#555" stroke-width="0.8" fill="#fff"/><path d="M1321 563.8L1714 563.8" stroke="#444" stroke-width="0.8" stroke-dasharray="6 2.4"/><rect x="1353.8" y="521.4" width="36.8" height="15" stroke="#666" stroke-width="0.8" fill="#fff"/><rect x="1355" y="522.3" width="21" height="13.2" stroke="#777" stroke-width="0.7" fill="#fff"/><path d="M1362.7 530.9l4.6 -3.2M1364.5 531.7l4.6 -3.2" stroke="#555" stroke-width="0.7" fill="none"/><rect x="1377.4" y="522.3" width="12.2" height="13.2" stroke="#777" stroke-width="0.7" fill="#fff"/><rect x="1378.8" y="523.7" width="9.4" height="10.4" stroke="#888" stroke-width="0.6" fill="#f2f2f2"/><path d="M1380.7 530.9l4.6 -3.2M1382.5 531.7l4.6 -3.2" stroke="#555" stroke-width="0.7" fill="none"/><rect x="1463.4" y="521.4" width="75.8" height="15" stroke="#666" stroke-width="0.8" fill="#fff"/><rect x="1464.6" y="522.3" width="20.4" height="13.2" stroke="#777" stroke-width="0.7" fill="#fff"/><path d="M1472 530.9l4.6 -3.2M1473.8 531.7l4.6 -3.2" stroke="#555" stroke-width="0.7" fill="none"/><rect x="1486.2" y="522.3" width="14" height="13.2" stroke="#777" stroke-width="0.7" fill="#fff"/><rect x="1487.6" y="523.7" width="11.2" height="10.4" stroke="#888" stroke-width="0.6" fill="#f2f2f2"/><path d="M1490.4 530.9l4.6 -3.2M1492.2 531.7l4.6 -3.2" stroke="#555" stroke-width="0.7" fill="none"/><rect x="1503" y="522.3" width="14" height="13.2" stroke="#777" stroke-width="0.7" fill="#fff"/><rect x="1504.4" y="523.7" width="11.2" height="10.4" stroke="#888" stroke-width="0.6" fill="#f2f2f2"/><path d="M1507.2 530.9l4.6 -3.2M1509 531.7l4.6 -3.2" stroke="#555" stroke-width="0.7" fill="none"/><rect x="1518.6" y="522.3" width="19.6" height="13.2" stroke="#777" stroke-width="0.7" fill="#fff"/><path d="M1525.6 530.9l4.6 -3.2M1527.4 531.7l4.6 -3.2" stroke="#555" stroke-width="0.7" fill="none"/><rect x="1594.1" y="521.4" width="75.7" height="15" stroke="#666" stroke-width="0.8" fill="#fff"/><rect x="1595.2" y="522.3" width="20.8" height="13.2" stroke="#777" stroke-width="0.7" fill="#fff"/><path d="M1602.8 530.9l4.6 -3.2M1604.6 531.7l4.6 -3.2" stroke="#555" stroke-width="0.7" fill="none"/><rect x="1617" y="522.3" width="14" height="13.2" stroke="#777" stroke-width="0.7" fill="#fff"/><rect x="1618.4" y="523.7" width="11.2" height="10.4" stroke="#888" stroke-width="0.6" fill="#f2f2f2"/><path d="M1621.2 530.9l4.6 -3.2M1623 531.7l4.6 -3.2" stroke="#555" stroke-width="0.7" fill="none"/><rect x="1634" y="522.3" width="14" height="13.2" stroke="#777" stroke-width="0.7" fill="#fff"/><rect x="1635.4" y="523.7" width="11.2" height="10.4" stroke="#888" stroke-width="0.6" fill="#f2f2f2"/><path d="M1638.2 530.9l4.6 -3.2M1640 531.7l4.6 -3.2" stroke="#555" stroke-width="0.7" fill="none"/><rect x="1650" y="522.3" width="18.8" height="13.2" stroke="#777" stroke-width="0.7" fill="#fff"/><path d="M1656.6 530.9l4.6 -3.2M1658.4 531.7l4.6 -3.2" stroke="#555" stroke-width="0.7" fill="none"/><path d="M1599 502.6L1662 502.6" stroke="#e9b9b9" stroke-width="0.7"/><path d="M1599 506.2L1654 506.2" stroke="#e9b9b9" stroke-width="0.7"/><path d="M1599 509.8L1662 509.8" stroke="#e9b9b9" stroke-width="0.7"/><path d="M1599 513.4L1654 513.4" stroke="#e9b9b9" stroke-width="0.7"/><path d="M1599 517L1662 517" stroke="#e9b9b9" stroke-width="0.7"/><rect x="1324.6" y="540.2" width="3" height="3.2" stroke="#555" stroke-width="0.7" fill="#fff"/><rect x="1708.6" y="540.2" width="3.2" height="3.2" stroke="#555" stroke-width="0.7" fill="#fff"/><rect x="1299" y="526.4" width="20.6" height="42.6" stroke="#333" stroke-width="1" fill="url(#hf)"/><path d="M1290 526.4H1319.6M1291.4 526.4V569M1294.6 526.4V569" stroke="#444" stroke-width="0.8" fill="none"/><path d="M1300 548H1319M1300 527L1319 568M1319 527L1300 568" stroke="#666" stroke-width="0.6" fill="none"/><path d="M1289.6 570.6L1907 570.6" stroke="#2a2a2a" stroke-width="1.05"/><path d="M1319.6 568.2L1907 567.4" stroke="#666" stroke-width="0.7"/><path d="M1718 487.2H1864.6M1718 489.4H1864.6" stroke="#333" stroke-width="0.9" fill="none"/><path d="M1730 489.4l-1 3.4h-1.6" stroke="#333" stroke-width="0.9" fill="none"/><path d="M1749 489.4l-1 3.4h-1.6" stroke="#333" stroke-width="0.9" fill="none"/><path d="M1768 489.4l-1 3.4h-1.6" stroke="#333" stroke-width="0.9" fill="none"/><path d="M1812 489.4l-1 3.4h-1.6" stroke="#333" stroke-width="0.9" fill="none"/><path d="M1832 489.4l-1 3.4h-1.6" stroke="#333" stroke-width="0.9" fill="none"/><path d="M1851 489.4l-1 3.4h-1.6" stroke="#333" stroke-width="0.9" fill="none"/><path d="M1715.2 493.6H1866M1715.2 502.2L1776 495.6H1806L1852 500.6L1862 494M1852 500.6L1857.6 523.6M1862 494V523.6" stroke="#444" stroke-width="0.8" fill="none"/><rect x="1716.2" y="523.6" width="149.8" height="42.4" stroke="#333" stroke-width="1" fill="url(#hf)"/><rect x="1750.4" y="524" width="39.6" height="42" stroke="#333" stroke-width="0.9" fill="none"/><rect x="1793" y="524" width="38.2" height="42" stroke="#333" stroke-width="0.9" fill="none"/><path d="M1750.4 545L1770.2 524L1790 545L1770.2 566ZM1793 545L1812 524L1831.2 545L1812 566ZM1750.4 538H1790M1750.4 552H1790M1793 538H1831.2M1793 552H1831.2" stroke="#777" stroke-width="0.55" fill="none"/><path d="M1716.2 523.6H1866" stroke="#222" stroke-width="1.2" fill="none"/><rect x="1866" y="457.2" width="41" height="108.8" stroke="#333" stroke-width="1" fill="url(#hp)"/><rect x="1866" y="457.2" width="41" height="2.4" stroke="#444" stroke-width="0.7" fill="#fff"/><rect x="1866" y="495.6" width="41" height="16" stroke="#666" stroke-width="0.7" fill="#fff"/><path d="M1876 495.6V511.6M1884 495.6V511.6" stroke="#aaa" stroke-width="0.7" fill="none"/><rect x="1899.4" y="472.4" width="7" height="9" stroke="#444" stroke-width="0.8" fill="#e8c8c8"/><path d="M1899.4 475.4h7M1899.4 478.4h7" stroke="#444" stroke-width="0.6" fill="none"/><path d="M1907 439.2V501L1891 504.4L1923.6 514.2L1907 519V586.6" stroke="#444" stroke-width="0.9" fill="#fff" fill-opacity="0"/><path d="M1907.5 501L1891.5 504.4L1924 514.2L1907.5 519Z" stroke="none" stroke-width="0" fill="#fff"/><path d="M1907 501L1891 504.4L1923.6 514.2L1907 519" stroke="#444" stroke-width="0.9" fill="none"/><rect x="1600.5" y="396.4" width="37" height="11.6" rx="5.8" fill="#fff" stroke="#777" stroke-width="0.8"/><text x="1619" y="405.2" font-size="8.3" text-anchor="middle">26.02</text><path d="M1600.6 402.2C1572 404 1565 440 1545.4 456.2" stroke="#555" stroke-width="0.75" fill="none"/><path d="M1544.6 457L1547.5 452.6L1549.4 454.9Z" fill="#222"/><rect x="1341.2" y="581.2" width="37" height="11.6" rx="5.8" fill="#fff" stroke="#777" stroke-width="0.8"/><text x="1359.7" y="590" font-size="8.3" text-anchor="middle">10.07</text><rect x="1341.2" y="593.6" width="37" height="11.6" rx="5.8" fill="#fff" stroke="#777" stroke-width="0.8"/><text x="1359.7" y="602.4" font-size="8.3" text-anchor="middle">32.07</text><rect x="1341.2" y="605.9" width="37" height="11.6" rx="5.8" fill="#fff" stroke="#777" stroke-width="0.8"/><text x="1359.7" y="614.7" font-size="8.3" text-anchor="middle">3.04</text><path d="M1341.2 587C1330 586 1333 560 1327.4 545.4" stroke="#555" stroke-width="0.75" fill="none"/><path d="M1327 544.6L1329.9 548.9L1327.2 549.8Z" fill="#222"/><path d="M1341.2 599.4C1322 598 1318 578 1308.6 563" stroke="#555" stroke-width="0.75" fill="none"/><path d="M1308 562L1311.8 565.5L1309.5 567Z" fill="#222"/><path d="M1378.2 611.7C1400 610 1405 582 1422.4 562" stroke="#555" stroke-width="0.75" fill="none"/><path d="M1423 561.2L1420.9 565.9L1418.7 564.1Z" fill="#222"/><path d="M1294.2 591.5L1302.7 577.5L1311.2 591.5Z" fill="#fff" stroke="#666" stroke-width="0.8"/><text x="1302.7" y="589.5" font-size="7.6" text-anchor="middle" fill="#333">2</text><path d="M1886.3 616.3L1894.8 602.3L1903.3 616.3Z" fill="#fff" stroke="#666" stroke-width="0.8"/><text x="1894.8" y="614.3" font-size="7.6" text-anchor="middle" fill="#333">2</text><text x="1804.4" y="397.1" font-size="8.5" textLength="66" lengthAdjust="spacingAndGlyphs">ENTRY CANOPY,</text><text x="1804.4" y="407.5" font-size="8.5" textLength="93" lengthAdjust="spacingAndGlyphs">RIBBED METAL PANEL</text><text x="1804.4" y="417.9" font-size="8.5" textLength="95" lengthAdjust="spacingAndGlyphs">O/ GALVANIZED STEEL</text><text x="1804.4" y="428.3" font-size="8.5" textLength="39" lengthAdjust="spacingAndGlyphs">FRAMING</text><text x="1804.4" y="438.7" font-size="8.5" textLength="43" lengthAdjust="spacingAndGlyphs">ADD ALT 1</text><path d="M1802 393.8C1776 394 1784 440 1791.2 482.6" stroke="#555" stroke-width="0.75" fill="none"/><path d="M1791.6 485L1789.5 480.2L1792.3 479.9Z" fill="#222"/><circle cx="1336" cy="632.2" r="15.2" fill="#fff" stroke="#555" stroke-width="0.9"/><path d="M1320.8 632.2L1826.8 632.2" stroke="#555" stroke-width="0.9"/><text x="1336" y="628.6" font-size="10" text-anchor="middle">3</text><text x="1336" y="639.8" font-size="5.8" text-anchor="middle" fill="#333">A3.01</text><text x="1354.4" y="629.7" font-size="11.4" textLength="168" lengthAdjust="spacingAndGlyphs">BUILDING 1 - EAST ELEVATION</text><text x="1354.4" y="640.8" font-size="7.4" textLength="76" lengthAdjust="spacingAndGlyphs">SCALE:  1/8" = 1'-0"</text><path d="M1042.9 688.6V768" stroke="#c4c4c4" stroke-width="0.9" stroke-dasharray="33.3 3 6 3 200"/><circle cx="1042.9" cy="679" r="9.4" fill="#fff" stroke="#a9a9a9" stroke-width="0.9"/><text x="1042.9" y="682.2" font-size="9" text-anchor="middle" fill="#7d7d7d">1</text><path d="M1164.8 688.6V768" stroke="#c4c4c4" stroke-width="0.9" stroke-dasharray="33.3 3 6 3 200"/><circle cx="1164.8" cy="679" r="9.4" fill="#fff" stroke="#a9a9a9" stroke-width="0.9"/><text x="1164.8" y="682.2" font-size="9" text-anchor="middle" fill="#7d7d7d">2</text><path d="M1287.9 688.6V768" stroke="#c4c4c4" stroke-width="0.9" stroke-dasharray="33.3 3 6 3 200"/><circle cx="1287.9" cy="679" r="9.4" fill="#fff" stroke="#a9a9a9" stroke-width="0.9"/><text x="1287.9" y="682.2" font-size="9" text-anchor="middle" fill="#7d7d7d">3</text><path d="M1420.2 688.6V768" stroke="#c4c4c4" stroke-width="0.9" stroke-dasharray="33.3 3 6 3 200"/><circle cx="1420.2" cy="679" r="9.4" fill="#fff" stroke="#a9a9a9" stroke-width="0.9"/><text x="1420.2" y="682.2" font-size="9" text-anchor="middle" fill="#7d7d7d">4</text><path d="M1551.6 688.6V768" stroke="#c4c4c4" stroke-width="0.9" stroke-dasharray="33.3 3 6 3 200"/><circle cx="1551.6" cy="679" r="9.4" fill="#fff" stroke="#a9a9a9" stroke-width="0.9"/><text x="1551.6" y="682.2" font-size="9" text-anchor="middle" fill="#7d7d7d">5</text><path d="M1667.1 688.6V768" stroke="#c4c4c4" stroke-width="0.9" stroke-dasharray="33.3 3 6 3 200"/><circle cx="1667.1" cy="679" r="9.4" fill="#fff" stroke="#a9a9a9" stroke-width="0.9"/><text x="1667.1" y="682.2" font-size="9" text-anchor="middle" fill="#7d7d7d">6</text><path d="M1742.2 688.6V768" stroke="#c4c4c4" stroke-width="0.9" stroke-dasharray="33.3 3 6 3 200"/><circle cx="1742.2" cy="679" r="9.4" fill="#fff" stroke="#a9a9a9" stroke-width="0.9"/><text x="1742.2" y="682.2" font-size="9" text-anchor="middle" fill="#7d7d7d">7</text><text x="1465.8" y="709.4" font-size="8.6" textLength="199.3" lengthAdjust="spacingAndGlyphs">CENTER LOUVERS AND LIGHTS ON CENTER OF</text><text x="1465.8" y="720" font-size="8.6" textLength="188.4" lengthAdjust="spacingAndGlyphs">RIB OR FROM EDGE OF RIB TO EDGE OF RIB.</text><path d="M1036 728.4a3.3 3.3 0 0 1 6.6 0a3.3 3.3 0 0 1 6.6 0a3.3 3.3 0 0 1 6.6 0a3.3 3.3 0 0 1 6.6 0a3.3 3.3 0 0 1 6.6 0a3.3 3.3 0 0 1 6.6 0a3.3 3.3 0 0 1 6.6 0a3.3 3.3 0 0 1 6.6 0a3.3 3.3 0 0 1 6.6 0a3.3 3.3 0 0 1 6.6 0a3.3 3.3 0 0 1 6.6 0a3.3 3.3 0 0 1 6.6 0a3.3 3.3 0 0 1 6.6 0a3.3 3.3 0 0 1 6.6 0a3.3 3.3 0 0 1 6.6 0a3.3 3.3 0 0 1 6.6 0a3.3 3.3 0 0 1 6.6 0a3.3 3.3 0 0 1 6.6 0a3.3 3.3 0 0 1 6.6 0a3.3 3.3 0 0 1 6.6 0a3.3 3.3 0 0 1 6.6 0a3.3 3.3 0 0 1 6.6 0a3.3 3.3 0 0 1 6.6 0a3.3 3.3 0 0 1 6.6 0a3.3 3.3 0 0 1 6.6 0a3.3 3.3 0 0 1 6.6 0a3.3 3.3 0 0 1 6.6 0a3.3 3.3 0 0 1 6.6 0a3.3 3.3 0 0 1 6.6 0a3.3 3.3 0 0 1 6.6 0a3.3 3.3 0 0 1 6.6 0a3.3 3.3 0 0 1 6.6 0a3.3 3.3 0 0 1 6.6 0a3.3 3.3 0 0 1 6.6 0a3.3 3.3 0 0 1 6.6 0a3.3 3.3 0 0 1 6.6 0a3.3 3.3 0 0 1 6.6 0a3.3 3.3 0 0 1 6.6 0a3.3 3.3 0 0 1 6.6 0a3.3 3.3 0 0 1 6.6 0a3.3 3.3 0 0 1 6.6 0a3.3 3.3 0 0 1 6.6 0a3.3 3.3 0 0 1 6.6 0a3.3 3.3 0 0 1 6.6 0a3.3 3.3 0 0 1 6.6 0a3.3 3.3 0 0 1 6.6 0a3.3 3.3 0 0 1 6.6 0a3.3 3.3 0 0 1 6.6 0a3.3 3.3 0 0 1 6.6 0a3.3 3.3 0 0 1 6.6 0a3.3 3.3 0 0 1 6.6 0a3.3 3.3 0 0 1 6.6 0a3.3 3.3 0 0 1 6.6 0a3.3 3.3 0 0 1 6.6 0a3.3 3.3 0 0 1 6.6 0a3.3 3.3 0 0 1 6.6 0a3.3 3.3 0 0 1 6.6 0a3.3 3.3 0 0 1 6.6 0a3.3 3.3 0 0 1 6.6 0a3.3 3.3 0 0 1 6.6 0a3.3 3.3 0 0 1 6.6 0a3.3 3.3 0 0 1 6.6 0a3.3 3.3 0 0 1 6.6 0a3.3 3.3 0 0 1 6.6 0a3.3 3.3 0 0 1 6.6 0a3.3 3.3 0 0 1 6.6 0a3.3 3.3 0 0 1 6.6 0a3.3 3.3 0 0 1 6.6 0a3.3 3.3 0 0 1 6.6 0a3.3 3.3 0 0 1 6.6 0a3.3 3.3 0 0 1 6.6 0a3.3 3.3 0 0 1 6.6 0a3.3 3.3 0 0 1 6.6 0a3.3 3.3 0 0 1 6.6 0a3.3 3.3 0 0 1 6.6 0a3.3 3.3 0 0 1 6.6 0a3.3 3.3 0 0 1 6.6 0a3.3 3.3 0 0 1 6.6 0a3.3 3.3 0 0 1 6.6 0a3.3 3.3 0 0 1 6.6 0a3.3 3.3 0 0 1 6.6 0a3.3 3.3 0 0 1 6.6 0a3.3 3.3 0 0 1 6.6 0a3.3 3.3 0 0 1 6.6 0a3.3 3.3 0 0 1 6.6 0a3.3 3.3 0 0 1 6.6 0a3.3 3.3 0 0 1 6.6 0a3.3 3.3 0 0 1 6.6 0a3.3 3.3 0 0 1 6.6 0a3.3 3.3 0 0 1 6.6 0a3.3 3.3 0 0 1 6.6 0a3.3 3.3 0 0 1 6.6 0" stroke="#666" stroke-width="0.8" fill="none" stroke-dasharray="7 0.8"/><path d="M1036 753.6a3.3 3.3 0 0 0 6.6 0a3.3 3.3 0 0 0 6.6 0a3.3 3.3 0 0 0 6.6 0a3.3 3.3 0 0 0 6.6 0a3.3 3.3 0 0 0 6.6 0a3.3 3.3 0 0 0 6.6 0a3.3 3.3 0 0 0 6.6 0a3.3 3.3 0 0 0 6.6 0a3.3 3.3 0 0 0 6.6 0a3.3 3.3 0 0 0 6.6 0a3.3 3.3 0 0 0 6.6 0a3.3 3.3 0 0 0 6.6 0a3.3 3.3 0 0 0 6.6 0a3.3 3.3 0 0 0 6.6 0a3.3 3.3 0 0 0 6.6 0a3.3 3.3 0 0 0 6.6 0a3.3 3.3 0 0 0 6.6 0a3.3 3.3 0 0 0 6.6 0a3.3 3.3 0 0 0 6.6 0a3.3 3.3 0 0 0 6.6 0a3.3 3.3 0 0 0 6.6 0a3.3 3.3 0 0 0 6.6 0a3.3 3.3 0 0 0 6.6 0a3.3 3.3 0 0 0 6.6 0a3.3 3.3 0 0 0 6.6 0a3.3 3.3 0 0 0 6.6 0a3.3 3.3 0 0 0 6.6 0a3.3 3.3 0 0 0 6.6 0a3.3 3.3 0 0 0 6.6 0a3.3 3.3 0 0 0 6.6 0a3.3 3.3 0 0 0 6.6 0a3.3 3.3 0 0 0 6.6 0a3.3 3.3 0 0 0 6.6 0a3.3 3.3 0 0 0 6.6 0a3.3 3.3 0 0 0 6.6 0a3.3 3.3 0 0 0 6.6 0a3.3 3.3 0 0 0 6.6 0a3.3 3.3 0 0 0 6.6 0a3.3 3.3 0 0 0 6.6 0a3.3 3.3 0 0 0 6.6 0a3.3 3.3 0 0 0 6.6 0a3.3 3.3 0 0 0 6.6 0a3.3 3.3 0 0 0 6.6 0a3.3 3.3 0 0 0 6.6 0a3.3 3.3 0 0 0 6.6 0a3.3 3.3 0 0 0 6.6 0a3.3 3.3 0 0 0 6.6 0a3.3 3.3 0 0 0 6.6 0a3.3 3.3 0 0 0 6.6 0a3.3 3.3 0 0 0 6.6 0a3.3 3.3 0 0 0 6.6 0a3.3 3.3 0 0 0 6.6 0a3.3 3.3 0 0 0 6.6 0a3.3 3.3 0 0 0 6.6 0a3.3 3.3 0 0 0 6.6 0" stroke="#666" stroke-width="0.8" fill="none" stroke-dasharray="7 0.8"/><path d="M1452 753.6a3.4 3.3 0 0 0 6.8 0a3.4 3.3 0 0 0 6.8 0a3.4 3.3 0 0 0 6.8 0a3.4 3.3 0 0 0 6.8 0a3.4 3.3 0 0 0 6.8 0a3.4 3.3 0 0 0 6.8 0a3.4 3.3 0 0 0 6.8 0a3.4 3.3 0 0 0 6.8 0a3.4 3.3 0 0 0 6.8 0a3.4 3.3 0 0 0 6.8 0" stroke="#666" stroke-width="0.8" fill="none" stroke-dasharray="7 0.8"/><path d="M1564 753.6a3.4 3.3 0 0 0 6.7 0a3.4 3.3 0 0 0 6.7 0a3.4 3.3 0 0 0 6.7 0a3.4 3.3 0 0 0 6.7 0a3.4 3.3 0 0 0 6.7 0a3.4 3.3 0 0 0 6.7 0a3.4 3.3 0 0 0 6.7 0a3.4 3.3 0 0 0 6.7 0a3.4 3.3 0 0 0 6.7 0a3.4 3.3 0 0 0 6.7 0a3.4 3.3 0 0 0 6.7 0" stroke="#666" stroke-width="0.8" fill="none" stroke-dasharray="7 0.8"/><path d="M1036 728.4a4 6.3 0 0 0 0 12.6a4 6.3 0 0 0 0 12.6M1640 728.4a4 6.3 0 0 1 0 12.6a4 6.3 0 0 1 0 12.6" stroke="#666" stroke-width="0.8" fill="none" stroke-dasharray="7 0.8"/><path d="M1400 753.6q8 9 22 6q12 -3 30 -6M1520 753.6q8 9 24 7q10 -2 20 -7" stroke="#666" stroke-width="0.8" fill="none" stroke-dasharray="7 0.8"/><path d="M1040 738.8L1650 738.8" stroke="#555" stroke-width="0.9"/><path d="M1039.5 741.7L1045.3 735.9" stroke="#222" stroke-width="1.1"/><path d="M1061.8 741.7L1067.6 735.9" stroke="#222" stroke-width="1.1"/><path d="M1162 741.7L1167.8 735.9" stroke="#222" stroke-width="1.1"/><path d="M1272.5 741.7L1278.3 735.9" stroke="#222" stroke-width="1.1"/><path d="M1338.5 741.7L1344.3 735.9" stroke="#222" stroke-width="1.1"/><path d="M1404.5 741.7L1410.3 735.9" stroke="#222" stroke-width="1.1"/><path d="M1532.6 741.7L1538.4 735.9" stroke="#222" stroke-width="1.1"/><path d="M1645.8 741.7L1651.6 735.9" stroke="#222" stroke-width="1.1"/><text x="1053.4" y="733.4" font-size="8.5" text-anchor="middle" textLength="21" lengthAdjust="spacingAndGlyphs">±3'-8"</text><text x="1115" y="737" font-size="8.5" text-anchor="middle" textLength="26.2" lengthAdjust="spacingAndGlyphs">±16'-4"</text><text x="1220.4" y="737" font-size="8.5" text-anchor="middle" textLength="26.2" lengthAdjust="spacingAndGlyphs">±18'-0"</text><text x="1308.8" y="737" font-size="8.5" text-anchor="middle" textLength="26.2" lengthAdjust="spacingAndGlyphs">±10'-9"</text><text x="1375" y="737" font-size="8.5" text-anchor="middle" textLength="26.2" lengthAdjust="spacingAndGlyphs">±10'-9"</text><text x="1471.3" y="737" font-size="8.5" text-anchor="middle" textLength="31" lengthAdjust="spacingAndGlyphs">±20'-10"</text><text x="1592" y="737" font-size="8.5" text-anchor="middle" textLength="26.2" lengthAdjust="spacingAndGlyphs">±18'-5"</text><path d="M1399 756.8H1428M1528 756.8H1560" stroke="#666" stroke-width="0.8" fill="none"/><path d="M1404.6 759.6L1410.2 754" stroke="#222" stroke-width="1.1"/><path d="M1417.4 759.6L1423 754" stroke="#222" stroke-width="1.1"/><path d="M1532.7 759.6L1538.3 754" stroke="#222" stroke-width="1.1"/><path d="M1548.8 759.6L1554.4 754" stroke="#222" stroke-width="1.1"/><text x="1441.6" y="750.2" font-size="8.5" text-anchor="middle" textLength="21" lengthAdjust="spacingAndGlyphs">±2'-0"</text><text x="1516.8" y="750.2" font-size="8.5" text-anchor="middle" textLength="21" lengthAdjust="spacingAndGlyphs">±2'-8"</text><path d="M1427 747.4H1431M1528.6 747.4H1533" stroke="#444" stroke-width="0.7" fill="none"/><path d="M1042.4 738.8L1042.4 768" stroke="#333" stroke-width="0.9"/><rect x="1034.5" y="770.6" width="714.6" height="36.4" stroke="#2a2a2a" stroke-width="1" fill="url(#hr)"/><path d="M1034.5 770.6L1749.1 770.6" stroke="#1a1a1a" stroke-width="1.2"/><rect x="1034.5" y="807" width="714.6" height="94.6" stroke="none" stroke-width="0" fill="url(#hl)"/><path d="M1692.7 807H1749.1V901.6H1601.2V879.5H1639.3V852H1692.7Z" stroke="none" stroke-width="0" fill="url(#hp)"/><path d="M1601.2 901.6V879.5H1639.3V852H1692.7V807" stroke="#999" stroke-width="0.6" fill="none"/><path d="M1034.5 807V901.6M1749.1 807V901.6" stroke="#2a2a2a" stroke-width="1" fill="none"/><path d="M1034.5 807L1749.1 807" stroke="#444" stroke-width="0.9"/><path d="M1034.5 809L1749.1 809" stroke="#999" stroke-width="0.6"/><path d="M1037 809V901.6M1039.6 809V901.6" stroke="#555" stroke-width="0.7" fill="none"/><path d="M1743 809V905M1745.6 809V905" stroke="#444" stroke-width="1" fill="none"/><path d="M1064.7 738.8L1064.7 816" stroke="#999" stroke-width="0.8"/><path d="M1275.4 738.8L1275.4 816" stroke="#444" stroke-width="0.8"/><path d="M1341.4 738.8L1341.4 816" stroke="#444" stroke-width="0.8"/><path d="M1407.4 738.8L1407.4 816" stroke="#444" stroke-width="0.8"/><path d="M1535.5 738.8L1535.5 816" stroke="#444" stroke-width="0.8"/><path d="M1648.7 738.8L1648.7 816" stroke="#444" stroke-width="0.8"/><path d="M1460 706.6C1430 708 1432 770 1410.4 813" stroke="#666" stroke-width="0.7" fill="none"/><path d="M1409.6 814.6L1410.5 809.5L1413.1 810.7Z" fill="#222"/><path d="M980 901.8H1372L1810 910.6" stroke="#2a2a2a" stroke-width="1.05" fill="none"/><path d="M1038.4 805a2.3 2.9 0 0 1 4.6 0a2.3 2.9 0 0 1 4.6 0a2.9 2.9 0 0 1 0 5.8a2.9 2.9 0 0 1 0 5.8a2.9 2.9 0 0 1 0 5.8a2.9 2.9 0 0 1 0 5.8a2.9 2.9 0 0 1 0 5.8a2.9 2.9 0 0 1 0 5.8a2.9 2.9 0 0 1 0 5.8a2.9 2.9 0 0 1 0 5.8a2.9 2.9 0 0 1 0 5.8a2.9 2.9 0 0 1 0 5.8a2.9 2.9 0 0 1 0 5.8a2.9 2.9 0 0 1 0 5.8a2.9 2.9 0 0 1 0 5.8a2.9 2.9 0 0 1 0 5.8a2.9 2.9 0 0 1 0 5.8a2.9 2.9 0 0 1 0 5.8a2.9 2.9 0 0 1 0 5.8a2.3 2.9 0 0 1 -4.6 0a2.3 2.9 0 0 1 -4.6 0a2.9 2.9 0 0 1 0 -5.8a2.9 2.9 0 0 1 0 -5.8a2.9 2.9 0 0 1 0 -5.8a2.9 2.9 0 0 1 0 -5.8a2.9 2.9 0 0 1 0 -5.8a2.9 2.9 0 0 1 0 -5.8a2.9 2.9 0 0 1 0 -5.8a2.9 2.9 0 0 1 0 -5.8a2.9 2.9 0 0 1 0 -5.8a2.9 2.9 0 0 1 0 -5.8a2.9 2.9 0 0 1 0 -5.8a2.9 2.9 0 0 1 0 -5.8a2.9 2.9 0 0 1 0 -5.8a2.9 2.9 0 0 1 0 -5.8a2.9 2.9 0 0 1 0 -5.8a2.9 2.9 0 0 1 0 -5.8a2.9 2.9 0 0 1 0 -5.8Z" stroke="#6a6a6a" stroke-width="0.75" fill="none" stroke-dasharray="6 0.8"/><path d="M1366.9 805a2.3 2.9 0 0 1 4.6 0a2.3 2.9 0 0 1 4.6 0a2.9 2.9 0 0 1 0 5.8a2.9 2.9 0 0 1 0 5.8a2.9 2.9 0 0 1 0 5.8a2.9 2.9 0 0 1 0 5.8a2.9 2.9 0 0 1 0 5.8a2.9 2.9 0 0 1 0 5.8a2.9 2.9 0 0 1 0 5.8a2.9 2.9 0 0 1 0 5.8a2.9 2.9 0 0 1 0 5.8a2.9 2.9 0 0 1 0 5.8a2.9 2.9 0 0 1 0 5.8a2.9 2.9 0 0 1 0 5.8a2.9 2.9 0 0 1 0 5.8a2.9 2.9 0 0 1 0 5.8a2.9 2.9 0 0 1 0 5.8a2.9 2.9 0 0 1 0 5.8a2.9 2.9 0 0 1 0 5.8a2.3 2.9 0 0 1 -4.6 0a2.3 2.9 0 0 1 -4.6 0a2.9 2.9 0 0 1 0 -5.8a2.9 2.9 0 0 1 0 -5.8a2.9 2.9 0 0 1 0 -5.8a2.9 2.9 0 0 1 0 -5.8a2.9 2.9 0 0 1 0 -5.8a2.9 2.9 0 0 1 0 -5.8a2.9 2.9 0 0 1 0 -5.8a2.9 2.9 0 0 1 0 -5.8a2.9 2.9 0 0 1 0 -5.8a2.9 2.9 0 0 1 0 -5.8a2.9 2.9 0 0 1 0 -5.8a2.9 2.9 0 0 1 0 -5.8a2.9 2.9 0 0 1 0 -5.8a2.9 2.9 0 0 1 0 -5.8a2.9 2.9 0 0 1 0 -5.8a2.9 2.9 0 0 1 0 -5.8a2.9 2.9 0 0 1 0 -5.8Z" stroke="#6a6a6a" stroke-width="0.75" fill="none" stroke-dasharray="6 0.8"/><path d="M1737.9 805a2.3 2.9 0 0 1 4.6 0a2.3 2.9 0 0 1 4.6 0a2.9 2.9 0 0 1 0 5.8a2.9 2.9 0 0 1 0 5.8a2.9 2.9 0 0 1 0 5.8a2.9 2.9 0 0 1 0 5.8a2.9 2.9 0 0 1 0 5.8a2.9 2.9 0 0 1 0 5.8a2.9 2.9 0 0 1 0 5.8a2.9 2.9 0 0 1 0 5.8a2.9 2.9 0 0 1 0 5.8a2.9 2.9 0 0 1 0 5.8a2.9 2.9 0 0 1 0 5.8a2.9 2.9 0 0 1 0 5.8a2.9 2.9 0 0 1 0 5.8a2.9 2.9 0 0 1 0 5.8a2.9 2.9 0 0 1 0 5.8a2.9 2.9 0 0 1 0 5.8a2.9 2.9 0 0 1 0 5.8a2.3 2.9 0 0 1 -4.6 0a2.3 2.9 0 0 1 -4.6 0a2.9 2.9 0 0 1 0 -5.8a2.9 2.9 0 0 1 0 -5.8a2.9 2.9 0 0 1 0 -5.8a2.9 2.9 0 0 1 0 -5.8a2.9 2.9 0 0 1 0 -5.8a2.9 2.9 0 0 1 0 -5.8a2.9 2.9 0 0 1 0 -5.8a2.9 2.9 0 0 1 0 -5.8a2.9 2.9 0 0 1 0 -5.8a2.9 2.9 0 0 1 0 -5.8a2.9 2.9 0 0 1 0 -5.8a2.9 2.9 0 0 1 0 -5.8a2.9 2.9 0 0 1 0 -5.8a2.9 2.9 0 0 1 0 -5.8a2.9 2.9 0 0 1 0 -5.8a2.9 2.9 0 0 1 0 -5.8a2.9 2.9 0 0 1 0 -5.8Z" stroke="#6a6a6a" stroke-width="0.75" fill="none" stroke-dasharray="6 0.8"/><rect x="1087.3" y="820.8" width="156.5" height="15.1" stroke="#444" stroke-width="0.9" fill="#fff"/><rect x="1087.3" y="820.8" width="38.4" height="15.1" stroke="#555" stroke-width="0.8" fill="#fff"/><rect x="1088.9" y="821.8" width="13.2" height="13.1" stroke="#777" stroke-width="0.7" fill="#fff"/><rect x="1090.3" y="823.2" width="10.4" height="10.3" stroke="#888" stroke-width="0.6" fill="#f2f2f2"/><path d="M1092.7 830.3l4.6 -3.2M1094.5 831.1l4.6 -3.2" stroke="#555" stroke-width="0.7" fill="none"/><rect x="1102.9" y="821.8" width="21.8" height="13.1" stroke="#777" stroke-width="0.7" fill="#fff"/><path d="M1111 830.3l4.6 -3.2M1112.8 831.1l4.6 -3.2" stroke="#555" stroke-width="0.7" fill="none"/><rect x="1126.6" y="820.8" width="36.8" height="15.1" stroke="#555" stroke-width="0.8" fill="#fff"/><rect x="1127.6" y="821.8" width="20.2" height="13.1" stroke="#777" stroke-width="0.7" fill="#fff"/><path d="M1134.9 830.3l4.6 -3.2M1136.7 831.1l4.6 -3.2" stroke="#555" stroke-width="0.7" fill="none"/><rect x="1148.6" y="821.8" width="13.2" height="13.1" stroke="#777" stroke-width="0.7" fill="#fff"/><rect x="1150" y="823.2" width="10.4" height="10.3" stroke="#888" stroke-width="0.6" fill="#f2f2f2"/><path d="M1152.4 830.3l4.6 -3.2M1154.2 831.1l4.6 -3.2" stroke="#555" stroke-width="0.7" fill="none"/><rect x="1166.8" y="820.8" width="36.8" height="15.1" stroke="#555" stroke-width="0.8" fill="#fff"/><rect x="1168.4" y="821.8" width="13.2" height="13.1" stroke="#777" stroke-width="0.7" fill="#fff"/><rect x="1169.8" y="823.2" width="10.4" height="10.3" stroke="#888" stroke-width="0.6" fill="#f2f2f2"/><path d="M1172.2 830.3l4.6 -3.2M1174 831.1l4.6 -3.2" stroke="#555" stroke-width="0.7" fill="none"/><rect x="1182.4" y="821.8" width="20.2" height="13.1" stroke="#777" stroke-width="0.7" fill="#fff"/><path d="M1189.7 830.3l4.6 -3.2M1191.5 831.1l4.6 -3.2" stroke="#555" stroke-width="0.7" fill="none"/><rect x="1206.2" y="820.8" width="37.6" height="15.1" stroke="#555" stroke-width="0.8" fill="#fff"/><rect x="1207.2" y="821.8" width="21" height="13.1" stroke="#777" stroke-width="0.7" fill="#fff"/><path d="M1214.9 830.3l4.6 -3.2M1216.7 831.1l4.6 -3.2" stroke="#555" stroke-width="0.7" fill="none"/><rect x="1229" y="821.8" width="13.2" height="13.1" stroke="#777" stroke-width="0.7" fill="#fff"/><rect x="1230.4" y="823.2" width="10.4" height="10.3" stroke="#888" stroke-width="0.6" fill="#f2f2f2"/><path d="M1232.8 830.3l4.6 -3.2M1234.6 831.1l4.6 -3.2" stroke="#555" stroke-width="0.7" fill="none"/><path d="M1057.7 814.8a3.5 2.9 0 0 1 7 0a3.5 2.9 0 0 1 7 0a2.9 3.3 0 0 1 0 6.5a2.9 3.3 0 0 1 0 6.5a2.9 3.3 0 0 1 0 6.5a3.5 2.9 0 0 1 -7 0a3.5 2.9 0 0 1 -7 0a2.9 3.3 0 0 1 0 -6.5a2.9 3.3 0 0 1 0 -6.5a2.9 3.3 0 0 1 0 -6.5Z" stroke="#6a6a6a" stroke-width="0.75" fill="none" stroke-dasharray="6 0.8"/><rect x="1060.4" y="817.1" width="8.6" height="8.6" stroke="#333" stroke-width="0.9" fill="url(#lv)"/><rect x="1061.7" y="827.8" width="6" height="3" rx="1.2" fill="#fff" stroke="#555" stroke-width="0.7"/><path d="M1268.4 815.2a3.5 2.9 0 0 1 7 0a3.5 2.9 0 0 1 7 0a2.9 3.3 0 0 1 0 6.5a2.9 3.3 0 0 1 0 6.5a2.9 3.3 0 0 1 0 6.5a3.5 2.9 0 0 1 -7 0a3.5 2.9 0 0 1 -7 0a2.9 3.3 0 0 1 0 -6.5a2.9 3.3 0 0 1 0 -6.5a2.9 3.3 0 0 1 0 -6.5Z" stroke="#6a6a6a" stroke-width="0.75" fill="none" stroke-dasharray="6 0.8"/><rect x="1271.1" y="817.5" width="8.6" height="8.6" stroke="#333" stroke-width="0.9" fill="url(#lv)"/><rect x="1272.4" y="828.2" width="6" height="3" rx="1.2" fill="#fff" stroke="#555" stroke-width="0.7"/><path d="M1334.4 814.6a3.5 2.9 0 0 1 7 0a3.5 2.9 0 0 1 7 0a2.9 3.3 0 0 1 0 6.6a2.9 3.3 0 0 1 0 6.6a3.5 2.9 0 0 1 -7 0a3.5 2.9 0 0 1 -7 0a2.9 3.3 0 0 1 0 -6.6a2.9 3.3 0 0 1 0 -6.6Z" stroke="#6a6a6a" stroke-width="0.75" fill="none" stroke-dasharray="6 0.8"/><rect x="1337.1" y="816.9" width="8.6" height="8.6" stroke="#333" stroke-width="0.9" fill="url(#lv)"/><path d="M1400.4 815.2a3.5 2.9 0 0 1 7 0a3.5 2.9 0 0 1 7 0a2.9 3.3 0 0 1 0 6.5a2.9 3.3 0 0 1 0 6.5a2.9 3.3 0 0 1 0 6.5a3.5 2.9 0 0 1 -7 0a3.5 2.9 0 0 1 -7 0a2.9 3.3 0 0 1 0 -6.5a2.9 3.3 0 0 1 0 -6.5a2.9 3.3 0 0 1 0 -6.5Z" stroke="#6a6a6a" stroke-width="0.75" fill="none" stroke-dasharray="6 0.8"/><rect x="1403.1" y="817.5" width="8.6" height="8.6" stroke="#333" stroke-width="0.9" fill="url(#lv)"/><rect x="1404.4" y="828.2" width="6" height="3" rx="1.2" fill="#fff" stroke="#555" stroke-width="0.7"/><path d="M1528.5 814.8a3.5 2.9 0 0 1 7 0a3.5 2.9 0 0 1 7 0a2.9 3.3 0 0 1 0 6.6a2.9 3.3 0 0 1 0 6.6a3.5 2.9 0 0 1 -7 0a3.5 2.9 0 0 1 -7 0a2.9 3.3 0 0 1 0 -6.6a2.9 3.3 0 0 1 0 -6.6Z" stroke="#6a6a6a" stroke-width="0.75" fill="none" stroke-dasharray="6 0.8"/><rect x="1531.2" y="817.1" width="8.6" height="8.6" stroke="#333" stroke-width="0.9" fill="url(#lv)"/><path d="M1641.7 814.8a3.5 2.9 0 0 1 7 0a3.5 2.9 0 0 1 7 0a2.9 3.3 0 0 1 0 6.6a2.9 3.3 0 0 1 0 6.6a3.5 2.9 0 0 1 -7 0a3.5 2.9 0 0 1 -7 0a2.9 3.3 0 0 1 0 -6.6a2.9 3.3 0 0 1 0 -6.6Z" stroke="#6a6a6a" stroke-width="0.75" fill="none" stroke-dasharray="6 0.8"/><rect x="1644.4" y="817.1" width="8.6" height="8.6" stroke="#333" stroke-width="0.9" fill="url(#lv)"/><path d="M1573.2 824.6a2.5 2.9 0 0 1 4.9 0a2.5 2.9 0 0 1 4.9 0a2.5 2.9 0 0 1 4.9 0a2.9 2.8 0 0 1 0 5.7a2.9 2.8 0 0 1 0 5.7a2.5 2.9 0 0 1 -4.9 0a2.5 2.9 0 0 1 -4.9 0a2.5 2.9 0 0 1 -4.9 0a2.9 2.8 0 0 1 0 -5.7a2.9 2.8 0 0 1 0 -5.7Z" stroke="#6a6a6a" stroke-width="0.75" fill="none" stroke-dasharray="6 0.8"/><rect x="1577.4" y="828.4" width="6.4" height="3.2" fill="#fff" stroke="#555" stroke-width="0.7"/><path d="M1580.6 836L1580.6 865" stroke="#bbb" stroke-width="0.8" stroke-dasharray="5 2 1 2"/><path d="M1708.4 824.6a2.5 2.9 0 0 1 4.9 0a2.5 2.9 0 0 1 4.9 0a2.5 2.9 0 0 1 4.9 0a2.9 2.8 0 0 1 0 5.7a2.9 2.8 0 0 1 0 5.7a2.5 2.9 0 0 1 -4.9 0a2.5 2.9 0 0 1 -4.9 0a2.5 2.9 0 0 1 -4.9 0a2.9 2.8 0 0 1 0 -5.7a2.9 2.8 0 0 1 0 -5.7Z" stroke="#6a6a6a" stroke-width="0.75" fill="none" stroke-dasharray="6 0.8"/><rect x="1712.6" y="828.4" width="6.4" height="3.2" fill="#fff" stroke="#555" stroke-width="0.7"/><path d="M1715.8 836L1715.8 865" stroke="#bbb" stroke-width="0.8" stroke-dasharray="5 2 1 2"/><path d="M1064.7 836L1064.7 866" stroke="#777" stroke-width="0.7" stroke-dasharray="6 2 1 2"/><path d="M1275.4 836L1275.4 866" stroke="#777" stroke-width="0.7" stroke-dasharray="6 2 1 2"/><path d="M1341.4 836L1341.4 866" stroke="#777" stroke-width="0.7" stroke-dasharray="6 2 1 2"/><path d="M1407.4 836L1407.4 866" stroke="#777" stroke-width="0.7" stroke-dasharray="6 2 1 2"/><path d="M1535.5 836L1535.5 866" stroke="#777" stroke-width="0.7" stroke-dasharray="6 2 1 2"/><text x="1064.7" y="866.4" font-size="5" text-anchor="middle" fill="#555">c</text><path d="M1069.1 841.3L1077.6 827.3L1086.1 841.3Z" fill="#fff" stroke="#666" stroke-width="0.8"/><text x="1077.6" y="839.3" font-size="7.6" text-anchor="middle" fill="#333">3</text><path d="M1255.7 842.1L1264.2 828.1L1272.7 842.1Z" fill="#fff" stroke="#666" stroke-width="0.8"/><text x="1264.2" y="840.1" font-size="7.6" text-anchor="middle" fill="#333">3</text><path d="M1323.3 835.8L1331.8 821.8L1340.3 835.8Z" fill="#fff" stroke="#666" stroke-width="0.8"/><text x="1331.8" y="833.8" font-size="7.6" text-anchor="middle" fill="#333">3</text><path d="M1386.7 840.5L1395.2 826.5L1403.7 840.5Z" fill="#fff" stroke="#666" stroke-width="0.8"/><text x="1395.2" y="838.5" font-size="7.6" text-anchor="middle" fill="#333">3</text><path d="M1517.1 835.8L1525.6 821.8L1534.1 835.8Z" fill="#fff" stroke="#666" stroke-width="0.8"/><text x="1525.6" y="833.8" font-size="7.6" text-anchor="middle" fill="#333">3</text><path d="M1586.4 843.8L1594.9 829.8L1603.4 843.8Z" fill="#fff" stroke="#666" stroke-width="0.8"/><text x="1594.9" y="841.8" font-size="7.6" text-anchor="middle" fill="#333">3</text><path d="M1630 835.8L1638.5 821.8L1647 835.8Z" fill="#fff" stroke="#666" stroke-width="0.8"/><text x="1638.5" y="833.8" font-size="7.6" text-anchor="middle" fill="#333">3</text><path d="M1693.5 843.8L1702 829.8L1710.5 843.8Z" fill="#fff" stroke="#666" stroke-width="0.8"/><text x="1702" y="841.8" font-size="7.6" text-anchor="middle" fill="#333">3</text><path d="M1046.3 913.9L1054.3 900.8L1062.3 913.9Z" fill="#fff" stroke="#666" stroke-width="0.8"/><text x="1054.3" y="911.9" font-size="7.6" text-anchor="middle" fill="#333">3</text><path d="M1249 913.9L1257 900.8L1265 913.9Z" fill="#fff" stroke="#666" stroke-width="0.8"/><text x="1257" y="911.9" font-size="7.6" text-anchor="middle" fill="#333">3</text><path d="M1354.2 913.9L1362.2 900.8L1370.2 913.9Z" fill="#fff" stroke="#666" stroke-width="0.8"/><text x="1362.2" y="911.9" font-size="7.6" text-anchor="middle" fill="#333">3</text><path d="M1554.3 918.5L1562.3 905.4L1570.3 918.5Z" fill="#fff" stroke="#666" stroke-width="0.8"/><text x="1562.3" y="916.5" font-size="7.6" text-anchor="middle" fill="#333">3</text><path d="M1743 921.5L1751 908.4L1759 921.5Z" fill="#fff" stroke="#666" stroke-width="0.8"/><text x="1751" y="919.5" font-size="7.6" text-anchor="middle" fill="#333">3</text><path d="M1261.2 853.2a3 2.9 0 0 1 6 0a3 2.9 0 0 1 6 0a3 2.9 0 0 1 6 0a3 2.9 0 0 1 6 0a3 2.9 0 0 1 6 0a2.9 3 0 0 1 0 6.1a2.9 3 0 0 1 0 6.1a2.9 3 0 0 1 0 6.1a2.9 3 0 0 1 0 6.1a2.9 3 0 0 1 0 6.1a2.9 3 0 0 1 0 6.1a2.9 3 0 0 1 0 6.1a2.9 3 0 0 1 0 6.1a3 2.9 0 0 1 -6 0a3 2.9 0 0 1 -6 0a3 2.9 0 0 1 -6 0a3 2.9 0 0 1 -6 0a3 2.9 0 0 1 -6 0a2.9 3 0 0 1 0 -6.1a2.9 3 0 0 1 0 -6.1a2.9 3 0 0 1 0 -6.1a2.9 3 0 0 1 0 -6.1a2.9 3 0 0 1 0 -6.1a2.9 3 0 0 1 0 -6.1a2.9 3 0 0 1 0 -6.1a2.9 3 0 0 1 0 -6.1Z" stroke="#6a6a6a" stroke-width="0.75" fill="none" stroke-dasharray="6 0.8"/><rect x="1265.8" y="857.8" width="21" height="43.8" stroke="#555" stroke-width="0.9" fill="#fff"/><rect x="1267.4" y="859.4" width="17.8" height="42.2" stroke="#999" stroke-width="0.6" fill="none"/><path d="M1284.8 859.8L1267.8 879.7L1284.8 900.6" stroke="#999" stroke-width="0.6" fill="none" stroke-dasharray="5 1.6"/><rect x="1379.4" y="858.9" width="38.1" height="42.7" stroke="#555" stroke-width="0.9" fill="#fff"/><rect x="1381" y="860.5" width="34.9" height="41.1" stroke="#999" stroke-width="0.6" fill="none"/><path d="M1398.5 858.9L1398.5 901.6" stroke="#444" stroke-width="0.8"/><path d="M1398.5 860.9L1381.4 880.2L1398.5 900.6M1398.5 860.9L1415.5 880.2L1398.5 900.6" stroke="#999" stroke-width="0.6" fill="none" stroke-dasharray="5 1.6"/><path d="M1565.3 860.8a3 2.9 0 0 1 6 0a3 2.9 0 0 1 6 0a3 2.9 0 0 1 6 0a3 2.9 0 0 1 6 0a3 2.9 0 0 1 6 0a2.9 2.9 0 0 1 0 5.8a2.9 2.9 0 0 1 0 5.8a2.9 2.9 0 0 1 0 5.8a2.9 2.9 0 0 1 0 5.8a2.9 2.9 0 0 1 0 5.8a2.9 2.9 0 0 1 0 5.8a2.9 2.9 0 0 1 0 5.8a2.9 2.9 0 0 1 0 5.8a3 2.9 0 0 1 -6 0a3 2.9 0 0 1 -6 0a3 2.9 0 0 1 -6 0a3 2.9 0 0 1 -6 0a3 2.9 0 0 1 -6 0a2.9 2.9 0 0 1 0 -5.8a2.9 2.9 0 0 1 0 -5.8a2.9 2.9 0 0 1 0 -5.8a2.9 2.9 0 0 1 0 -5.8a2.9 2.9 0 0 1 0 -5.8a2.9 2.9 0 0 1 0 -5.8a2.9 2.9 0 0 1 0 -5.8a2.9 2.9 0 0 1 0 -5.8Z" stroke="#6a6a6a" stroke-width="0.75" fill="none" stroke-dasharray="6 0.8"/><rect x="1569.9" y="865.4" width="21" height="41.9" stroke="#555" stroke-width="0.9" fill="#fff"/><rect x="1571.5" y="867" width="17.8" height="40.3" stroke="#999" stroke-width="0.6" fill="none"/><path d="M1588.9 867.4L1571.9 886.3L1588.9 906.3" stroke="#999" stroke-width="0.6" fill="none" stroke-dasharray="5 1.6"/><rect x="1324.1" y="858.9" width="36.3" height="15.3" stroke="#666" stroke-width="0.8" fill="#fff"/><rect x="1325.2" y="859.8" width="20.4" height="13.5" stroke="#777" stroke-width="0.7" fill="#fff"/><path d="M1332.6 868.5l4.6 -3.2M1334.4 869.3l4.6 -3.2" stroke="#555" stroke-width="0.7" fill="none"/><rect x="1347" y="859.8" width="12.2" height="13.5" stroke="#777" stroke-width="0.7" fill="#fff"/><rect x="1348.4" y="861.2" width="9.4" height="10.7" stroke="#888" stroke-width="0.6" fill="#f2f2f2"/><path d="M1350.3 868.5l4.6 -3.2M1352.1 869.3l4.6 -3.2" stroke="#555" stroke-width="0.7" fill="none"/><rect x="1619.1" y="865.4" width="36.7" height="14.2" stroke="#666" stroke-width="0.8" fill="#fff"/><rect x="1620.2" y="866.3" width="20.4" height="12.4" stroke="#777" stroke-width="0.7" fill="#fff"/><path d="M1627.6 874.5l4.6 -3.2M1629.4 875.3l4.6 -3.2" stroke="#555" stroke-width="0.7" fill="none"/><rect x="1642" y="866.3" width="12.6" height="12.4" stroke="#777" stroke-width="0.7" fill="#fff"/><rect x="1643.4" y="867.7" width="9.8" height="9.6" stroke="#888" stroke-width="0.6" fill="#f2f2f2"/><path d="M1645.5 874.5l4.6 -3.2M1647.3 875.3l4.6 -3.2" stroke="#555" stroke-width="0.7" fill="none"/><path d="M1409 827.6H1438M1435.4 827.6V901.6" stroke="#333" stroke-width="0.8" fill="none"/><path d="M1432.8 830.2L1438 825" stroke="#222" stroke-width="1.1"/><path d="M1432.8 904.2L1438 899" stroke="#222" stroke-width="1.1"/><text x="1432.4" y="865.4" font-size="8.5" text-anchor="middle" transform="rotate(-90 1432.4 865.4)">12'-0"</text><text x="1443.2" y="865.4" font-size="8.5" text-anchor="middle" transform="rotate(-90 1443.2 865.4)">TYP.</text><path d="M1749.1 770.6H1796M1749.1 807H1782M1752 906.4H1782M1752 911H1796" stroke="#999" stroke-width="0.7" fill="none"/><path d="M1776.5 807V906.4M1791 770.6V911" stroke="#888" stroke-width="0.8" fill="none"/><path d="M1773.9 809.6L1779.1 804.4" stroke="#222" stroke-width="1.1"/><path d="M1773.9 909L1779.1 903.8" stroke="#222" stroke-width="1.1"/><path d="M1788.4 773.2L1793.6 768" stroke="#222" stroke-width="1.1"/><path d="M1788.4 913.6L1793.6 908.4" stroke="#222" stroke-width="1.1"/><path d="M1760 909L1765.2 903.8" stroke="#222" stroke-width="1.1"/><path d="M1760 913.6L1765.2 908.4" stroke="#222" stroke-width="1.1"/><path d="M1762.6 899L1762.6 915" stroke="#333" stroke-width="0.8"/><text x="1773.6" y="859.4" font-size="8.5" text-anchor="middle" transform="rotate(-90 1773.6 859.4)">16'-9"</text><text x="1788.2" y="840.6" font-size="8.5" text-anchor="middle" transform="rotate(-90 1788.2 840.6)">22'-10 3/4"</text><text x="1780.6" y="905.6" font-size="7.5" text-anchor="middle" transform="rotate(-90 1780.6 905.6)">6"</text><rect x="1259.5" y="925.5" width="37" height="11.6" rx="5.8" fill="#fff" stroke="#777" stroke-width="0.8"/><text x="1278" y="934.3" font-size="8.3" text-anchor="middle">8.05</text><rect x="1315.2" y="925.5" width="37" height="11.6" rx="5.8" fill="#fff" stroke="#777" stroke-width="0.8"/><text x="1333.7" y="934.3" font-size="8.3" text-anchor="middle">8.01</text><rect x="1450.8" y="925.2" width="37" height="11.6" rx="5.8" fill="#fff" stroke="#777" stroke-width="0.8"/><text x="1469.3" y="934" font-size="8.3" text-anchor="middle">8.01</text><rect x="1450.8" y="937.7" width="37" height="11.6" rx="5.8" fill="#fff" stroke="#777" stroke-width="0.8"/><text x="1469.3" y="946.5" font-size="8.3" text-anchor="middle">7.04</text><rect x="1621.9" y="925.2" width="37" height="11.6" rx="5.8" fill="#fff" stroke="#777" stroke-width="0.8"/><text x="1640.4" y="934" font-size="8.3" text-anchor="middle">8.01</text><rect x="1621.9" y="937.7" width="37" height="11.6" rx="5.8" fill="#fff" stroke="#777" stroke-width="0.8"/><text x="1640.4" y="946.5" font-size="8.3" text-anchor="middle">3.06</text><rect x="1621.9" y="949.9" width="37" height="11.6" rx="5.8" fill="#fff" stroke="#777" stroke-width="0.8"/><text x="1640.4" y="958.7" font-size="8.3" text-anchor="middle">32.07</text><text x="1272.6" y="946.4" font-size="8.3" text-anchor="middle">TYP</text><path d="M1259.6 931.3C1240 928 1238 880 1219.6 846" stroke="#555" stroke-width="0.7" fill="none"/><path d="M1219 844.6L1222.6 848.4L1220.1 849.7Z" fill="#222"/><path d="M1315.2 931.3C1296 928 1294 905 1277.4 893.4" stroke="#555" stroke-width="0.7" fill="none"/><path d="M1276.4 892.6L1281.2 894.6L1279.5 896.8Z" fill="#222"/><path d="M1450.8 931C1425 929 1420 905 1402.4 893" stroke="#555" stroke-width="0.7" fill="none"/><path d="M1401.4 892.2L1406.2 894.2L1404.5 896.4Z" fill="#222"/><path d="M1450.8 943.5C1420 942 1400 915 1374.6 903.4" stroke="#555" stroke-width="0.7" fill="none"/><path d="M1373.6 903L1378.7 903.8L1377.5 906.4Z" fill="#222"/><path d="M1621.8 931C1600 929 1596 905 1581.4 892.4" stroke="#555" stroke-width="0.7" fill="none"/><path d="M1580.6 891.6L1585.3 893.9L1583.4 896Z" fill="#222"/><path d="M1659 943.5C1678 942 1680 922 1687.4 906.4" stroke="#555" stroke-width="0.7" fill="none"/><path d="M1688 905L1687.2 910.1L1684.6 908.9Z" fill="#222"/><path d="M1659 955.7C1700 954 1720 915 1744.4 892.4" stroke="#555" stroke-width="0.7" fill="none"/><path d="M1745.4 891.6L1742.6 896L1740.7 893.9Z" fill="#222"/><path d="M1829.1 947.7L1837.6 933.7L1846.1 947.7Z" fill="#fff" stroke="#666" stroke-width="0.8"/><text x="1837.6" y="945.7" font-size="7.6" text-anchor="middle" fill="#333">2</text><circle cx="1039" cy="976.8" r="15.2" fill="#fff" stroke="#555" stroke-width="0.9"/><path d="M1023.8 976.8L1799.6 976.8" stroke="#555" stroke-width="0.9"/><text x="1039" y="973.2" font-size="10" text-anchor="middle">2</text><text x="1039" y="984.4" font-size="5.8" text-anchor="middle" fill="#333">A3.01</text><text x="1057.4" y="974.3" font-size="11.4" textLength="181" lengthAdjust="spacingAndGlyphs">BUILDING 1 - SOUTH ELEVATION</text><text x="1057.4" y="985.4" font-size="7.4" textLength="76" lengthAdjust="spacingAndGlyphs">SCALE:  1/8" = 1'-0"</text><path d="M1040.1 1032V1112" stroke="#cfcfcf" stroke-width="0.9" stroke-dasharray="33.6 3 6 3 200"/><circle cx="1040.1" cy="1022.6" r="9.4" fill="#fff" stroke="#a9a9a9" stroke-width="0.9"/><text x="1040.1" y="1025.8" font-size="9" text-anchor="middle" fill="#7d7d7d">7</text><path d="M1115.8 1032V1112" stroke="#cfcfcf" stroke-width="0.9" stroke-dasharray="33.6 3 6 3 200"/><circle cx="1115.8" cy="1022.6" r="9.4" fill="#fff" stroke="#a9a9a9" stroke-width="0.9"/><text x="1115.8" y="1025.8" font-size="9" text-anchor="middle" fill="#7d7d7d">6</text><path d="M1230.8 1032V1112" stroke="#cfcfcf" stroke-width="0.9" stroke-dasharray="33.6 3 6 3 200"/><circle cx="1230.8" cy="1022.6" r="9.4" fill="#fff" stroke="#a9a9a9" stroke-width="0.9"/><text x="1230.8" y="1025.8" font-size="9" text-anchor="middle" fill="#7d7d7d">5</text><path d="M1363.2 1032V1112" stroke="#cfcfcf" stroke-width="0.9" stroke-dasharray="33.6 3 6 3 200"/><circle cx="1363.2" cy="1022.6" r="9.4" fill="#fff" stroke="#a9a9a9" stroke-width="0.9"/><text x="1363.2" y="1025.8" font-size="9" text-anchor="middle" fill="#7d7d7d">4</text><path d="M1494.8 1032V1112" stroke="#cfcfcf" stroke-width="0.9" stroke-dasharray="33.6 3 6 3 200"/><circle cx="1494.8" cy="1022.6" r="9.4" fill="#fff" stroke="#a9a9a9" stroke-width="0.9"/><text x="1494.8" y="1025.8" font-size="9" text-anchor="middle" fill="#7d7d7d">3</text><path d="M1618.1 1032V1112" stroke="#cfcfcf" stroke-width="0.9" stroke-dasharray="33.6 3 6 3 200"/><circle cx="1618.1" cy="1022.6" r="9.4" fill="#fff" stroke="#a9a9a9" stroke-width="0.9"/><text x="1618.1" y="1025.8" font-size="9" text-anchor="middle" fill="#7d7d7d">2</text><path d="M1740.7 1032V1112" stroke="#cfcfcf" stroke-width="0.9" stroke-dasharray="33.6 3 6 3 200"/><circle cx="1740.7" cy="1022.6" r="9.4" fill="#fff" stroke="#a9a9a9" stroke-width="0.9"/><text x="1740.7" y="1025.8" font-size="9" text-anchor="middle" fill="#7d7d7d">1</text><rect x="1034" y="1113.9" width="714.6" height="41.1" stroke="#2a2a2a" stroke-width="1" fill="url(#hr)"/><path d="M1034 1113.9L1748.6 1113.9" stroke="#1a1a1a" stroke-width="1.2"/><rect x="1271" y="1121.6" width="51.5" height="6" stroke="#333" stroke-width="0.9" fill="#fff"/><path d="M1272 1124.2L1321.5 1124.2" stroke="#777" stroke-width="0.6"/><path d="M1273 1127.6V1155M1296.8 1127.6V1155M1320.5 1127.6V1155" stroke="#555" stroke-width="0.7" fill="none"/><rect x="1403.5" y="1121.6" width="51.5" height="6" stroke="#333" stroke-width="0.9" fill="#fff"/><path d="M1404.5 1124.2L1454 1124.2" stroke="#777" stroke-width="0.6"/><path d="M1405.5 1127.6V1155M1429.2 1127.6V1155M1453 1127.6V1155" stroke="#555" stroke-width="0.7" fill="none"/><rect x="1531" y="1121.6" width="51.4" height="6" stroke="#333" stroke-width="0.9" fill="#fff"/><path d="M1532 1124.2L1581.4 1124.2" stroke="#777" stroke-width="0.6"/><path d="M1533 1127.6V1155M1556.7 1127.6V1155M1580.4 1127.6V1155" stroke="#555" stroke-width="0.7" fill="none"/><rect x="1653.5" y="1121.6" width="51.5" height="6" stroke="#333" stroke-width="0.9" fill="#fff"/><path d="M1654.5 1124.2L1704 1124.2" stroke="#777" stroke-width="0.6"/><path d="M1655.5 1127.6V1155M1679.2 1127.6V1155M1703 1127.6V1155" stroke="#555" stroke-width="0.7" fill="none"/><rect x="1034" y="1155" width="201.7" height="91.4" stroke="none" stroke-width="0" fill="url(#hp)"/><rect x="1235.7" y="1155" width="512.9" height="48.4" stroke="none" stroke-width="0" fill="url(#hl)"/><rect x="1235.7" y="1203.4" width="512.9" height="43" stroke="none" stroke-width="0" fill="url(#hp)"/><path d="M1034 1155V1253M1748.6 1155V1246.4" stroke="#2a2a2a" stroke-width="1" fill="none"/><path d="M1034 1155L1748.6 1155" stroke="#444" stroke-width="0.9"/><path d="M1034 1157L1748.6 1157" stroke="#aaa" stroke-width="0.6"/><path d="M1036.6 1157V1250M1039 1157V1250" stroke="#999" stroke-width="0.7" fill="none"/><path d="M1739 1157V1246M1741.4 1157V1246M1743.8 1157V1246" stroke="#444" stroke-width="0.8" fill="none"/><path d="M1235.7 1203.4L1748.6 1203.4" stroke="#bbb" stroke-width="0.6"/><rect x="1036" y="1176.2" width="711" height="3.6" stroke="#555" stroke-width="0.7" fill="#fff"/><circle cx="1046" cy="1174.6" r="1.1" fill="#fff" stroke="#666" stroke-width="0.5"/><circle cx="1056.9" cy="1174.6" r="1.1" fill="#fff" stroke="#666" stroke-width="0.5"/><circle cx="1067.8" cy="1174.6" r="1.1" fill="#fff" stroke="#666" stroke-width="0.5"/><circle cx="1078.7" cy="1174.6" r="1.1" fill="#fff" stroke="#666" stroke-width="0.5"/><circle cx="1089.6" cy="1174.6" r="1.1" fill="#fff" stroke="#666" stroke-width="0.5"/><circle cx="1100.5" cy="1174.6" r="1.1" fill="#fff" stroke="#666" stroke-width="0.5"/><circle cx="1111.4" cy="1174.6" r="1.1" fill="#fff" stroke="#666" stroke-width="0.5"/><circle cx="1122.3" cy="1174.6" r="1.1" fill="#fff" stroke="#666" stroke-width="0.5"/><circle cx="1133.2" cy="1174.6" r="1.1" fill="#fff" stroke="#666" stroke-width="0.5"/><circle cx="1144.1" cy="1174.6" r="1.1" fill="#fff" stroke="#666" stroke-width="0.5"/><circle cx="1155" cy="1174.6" r="1.1" fill="#fff" stroke="#666" stroke-width="0.5"/><circle cx="1165.9" cy="1174.6" r="1.1" fill="#fff" stroke="#666" stroke-width="0.5"/><circle cx="1176.8" cy="1174.6" r="1.1" fill="#fff" stroke="#666" stroke-width="0.5"/><circle cx="1187.7" cy="1174.6" r="1.1" fill="#fff" stroke="#666" stroke-width="0.5"/><circle cx="1198.6" cy="1174.6" r="1.1" fill="#fff" stroke="#666" stroke-width="0.5"/><circle cx="1209.5" cy="1174.6" r="1.1" fill="#fff" stroke="#666" stroke-width="0.5"/><circle cx="1220.4" cy="1174.6" r="1.1" fill="#fff" stroke="#666" stroke-width="0.5"/><circle cx="1231.3" cy="1174.6" r="1.1" fill="#fff" stroke="#666" stroke-width="0.5"/><circle cx="1242.2" cy="1174.6" r="1.1" fill="#fff" stroke="#666" stroke-width="0.5"/><circle cx="1253.1" cy="1174.6" r="1.1" fill="#fff" stroke="#666" stroke-width="0.5"/><circle cx="1264" cy="1174.6" r="1.1" fill="#fff" stroke="#666" stroke-width="0.5"/><circle cx="1274.9" cy="1174.6" r="1.1" fill="#fff" stroke="#666" stroke-width="0.5"/><circle cx="1285.8" cy="1174.6" r="1.1" fill="#fff" stroke="#666" stroke-width="0.5"/><circle cx="1296.7" cy="1174.6" r="1.1" fill="#fff" stroke="#666" stroke-width="0.5"/><circle cx="1307.6" cy="1174.6" r="1.1" fill="#fff" stroke="#666" stroke-width="0.5"/><circle cx="1318.5" cy="1174.6" r="1.1" fill="#fff" stroke="#666" stroke-width="0.5"/><circle cx="1329.4" cy="1174.6" r="1.1" fill="#fff" stroke="#666" stroke-width="0.5"/><circle cx="1340.3" cy="1174.6" r="1.1" fill="#fff" stroke="#666" stroke-width="0.5"/><circle cx="1351.2" cy="1174.6" r="1.1" fill="#fff" stroke="#666" stroke-width="0.5"/><circle cx="1362.1" cy="1174.6" r="1.1" fill="#fff" stroke="#666" stroke-width="0.5"/><circle cx="1373" cy="1174.6" r="1.1" fill="#fff" stroke="#666" stroke-width="0.5"/><circle cx="1383.9" cy="1174.6" r="1.1" fill="#fff" stroke="#666" stroke-width="0.5"/><circle cx="1394.8" cy="1174.6" r="1.1" fill="#fff" stroke="#666" stroke-width="0.5"/><circle cx="1405.7" cy="1174.6" r="1.1" fill="#fff" stroke="#666" stroke-width="0.5"/><circle cx="1416.6" cy="1174.6" r="1.1" fill="#fff" stroke="#666" stroke-width="0.5"/><circle cx="1427.5" cy="1174.6" r="1.1" fill="#fff" stroke="#666" stroke-width="0.5"/><circle cx="1438.4" cy="1174.6" r="1.1" fill="#fff" stroke="#666" stroke-width="0.5"/><circle cx="1449.3" cy="1174.6" r="1.1" fill="#fff" stroke="#666" stroke-width="0.5"/><circle cx="1460.2" cy="1174.6" r="1.1" fill="#fff" stroke="#666" stroke-width="0.5"/><circle cx="1471.1" cy="1174.6" r="1.1" fill="#fff" stroke="#666" stroke-width="0.5"/><circle cx="1482" cy="1174.6" r="1.1" fill="#fff" stroke="#666" stroke-width="0.5"/><circle cx="1492.9" cy="1174.6" r="1.1" fill="#fff" stroke="#666" stroke-width="0.5"/><circle cx="1503.8" cy="1174.6" r="1.1" fill="#fff" stroke="#666" stroke-width="0.5"/><circle cx="1514.7" cy="1174.6" r="1.1" fill="#fff" stroke="#666" stroke-width="0.5"/><circle cx="1525.6" cy="1174.6" r="1.1" fill="#fff" stroke="#666" stroke-width="0.5"/><circle cx="1536.5" cy="1174.6" r="1.1" fill="#fff" stroke="#666" stroke-width="0.5"/><circle cx="1547.4" cy="1174.6" r="1.1" fill="#fff" stroke="#666" stroke-width="0.5"/><circle cx="1558.3" cy="1174.6" r="1.1" fill="#fff" stroke="#666" stroke-width="0.5"/><circle cx="1569.2" cy="1174.6" r="1.1" fill="#fff" stroke="#666" stroke-width="0.5"/><circle cx="1580.1" cy="1174.6" r="1.1" fill="#fff" stroke="#666" stroke-width="0.5"/><circle cx="1591" cy="1174.6" r="1.1" fill="#fff" stroke="#666" stroke-width="0.5"/><circle cx="1601.9" cy="1174.6" r="1.1" fill="#fff" stroke="#666" stroke-width="0.5"/><circle cx="1612.8" cy="1174.6" r="1.1" fill="#fff" stroke="#666" stroke-width="0.5"/><circle cx="1623.7" cy="1174.6" r="1.1" fill="#fff" stroke="#666" stroke-width="0.5"/><circle cx="1634.6" cy="1174.6" r="1.1" fill="#fff" stroke="#666" stroke-width="0.5"/><circle cx="1645.5" cy="1174.6" r="1.1" fill="#fff" stroke="#666" stroke-width="0.5"/><circle cx="1656.4" cy="1174.6" r="1.1" fill="#fff" stroke="#666" stroke-width="0.5"/><circle cx="1667.3" cy="1174.6" r="1.1" fill="#fff" stroke="#666" stroke-width="0.5"/><circle cx="1678.2" cy="1174.6" r="1.1" fill="#fff" stroke="#666" stroke-width="0.5"/><circle cx="1689.1" cy="1174.6" r="1.1" fill="#fff" stroke="#666" stroke-width="0.5"/><circle cx="1700" cy="1174.6" r="1.1" fill="#fff" stroke="#666" stroke-width="0.5"/><circle cx="1710.9" cy="1174.6" r="1.1" fill="#fff" stroke="#666" stroke-width="0.5"/><circle cx="1721.8" cy="1174.6" r="1.1" fill="#fff" stroke="#666" stroke-width="0.5"/><circle cx="1732.7" cy="1174.6" r="1.1" fill="#fff" stroke="#666" stroke-width="0.5"/><path d="M1117 1183.2L1235 1183.2" stroke="#444" stroke-width="0.8" stroke-dasharray="5 2"/><rect x="1049.8" y="1181" width="2.4" height="7.4" stroke="#444" stroke-width="0.7" fill="#fff"/><rect x="1166.2" y="1181" width="2.4" height="7.4" stroke="#444" stroke-width="0.7" fill="#fff"/><rect x="1230.2" y="1181" width="2.4" height="7.4" stroke="#444" stroke-width="0.7" fill="#fff"/><rect x="1361.4" y="1181" width="2.4" height="7.4" stroke="#444" stroke-width="0.7" fill="#fff"/><rect x="1493.4" y="1181" width="2.4" height="7.4" stroke="#444" stroke-width="0.7" fill="#fff"/><rect x="1616.4" y="1181" width="2.4" height="7.4" stroke="#444" stroke-width="0.7" fill="#fff"/><rect x="1739.2" y="1181" width="2.4" height="7.4" stroke="#444" stroke-width="0.7" fill="#fff"/><rect x="1133" y="1176.4" width="6" height="3.6" stroke="#444" stroke-width="0.7" fill="#fff"/><rect x="1294.6" y="1176.4" width="6" height="3.6" stroke="#444" stroke-width="0.7" fill="#fff"/><rect x="1426.4" y="1176.4" width="6" height="3.6" stroke="#444" stroke-width="0.7" fill="#fff"/><rect x="1553.6" y="1176.4" width="6" height="3.6" stroke="#444" stroke-width="0.7" fill="#fff"/><rect x="1676.6" y="1176.4" width="6" height="3.6" stroke="#444" stroke-width="0.7" fill="#fff"/><path d="M1236.7 1153a2.4 2.9 0 0 1 4.8 0a2.4 2.9 0 0 1 4.8 0a2.9 2.9 0 0 1 0 5.7a2.9 2.9 0 0 1 0 5.7a2.9 2.9 0 0 1 0 5.7a2.9 2.9 0 0 1 0 5.7a2.9 2.9 0 0 1 0 5.7a2.9 2.9 0 0 1 0 5.7a2.9 2.9 0 0 1 0 5.7a2.9 2.9 0 0 1 0 5.7a2.9 2.9 0 0 1 0 5.7a2.9 2.9 0 0 1 0 5.7a2.9 2.9 0 0 1 0 5.7a2.9 2.9 0 0 1 0 5.7a2.9 2.9 0 0 1 0 5.7a2.9 2.9 0 0 1 0 5.7a2.9 2.9 0 0 1 0 5.7a2.9 2.9 0 0 1 0 5.7a2.9 2.9 0 0 1 0 5.7a2.4 2.9 0 0 1 -4.8 0a2.4 2.9 0 0 1 -4.8 0a2.9 2.9 0 0 1 0 -5.7a2.9 2.9 0 0 1 0 -5.7a2.9 2.9 0 0 1 0 -5.7a2.9 2.9 0 0 1 0 -5.7a2.9 2.9 0 0 1 0 -5.7a2.9 2.9 0 0 1 0 -5.7a2.9 2.9 0 0 1 0 -5.7a2.9 2.9 0 0 1 0 -5.7a2.9 2.9 0 0 1 0 -5.7a2.9 2.9 0 0 1 0 -5.7a2.9 2.9 0 0 1 0 -5.7a2.9 2.9 0 0 1 0 -5.7a2.9 2.9 0 0 1 0 -5.7a2.9 2.9 0 0 1 0 -5.7a2.9 2.9 0 0 1 0 -5.7a2.9 2.9 0 0 1 0 -5.7a2.9 2.9 0 0 1 0 -5.7Z" stroke="#6a6a6a" stroke-width="0.75" fill="none" stroke-dasharray="6 0.8"/><path d="M1367 1153a2.4 2.9 0 0 1 4.8 0a2.4 2.9 0 0 1 4.8 0a2.9 2.9 0 0 1 0 5.7a2.9 2.9 0 0 1 0 5.7a2.9 2.9 0 0 1 0 5.7a2.9 2.9 0 0 1 0 5.7a2.9 2.9 0 0 1 0 5.7a2.9 2.9 0 0 1 0 5.7a2.9 2.9 0 0 1 0 5.7a2.9 2.9 0 0 1 0 5.7a2.9 2.9 0 0 1 0 5.7a2.9 2.9 0 0 1 0 5.7a2.9 2.9 0 0 1 0 5.7a2.9 2.9 0 0 1 0 5.7a2.9 2.9 0 0 1 0 5.7a2.9 2.9 0 0 1 0 5.7a2.9 2.9 0 0 1 0 5.7a2.9 2.9 0 0 1 0 5.7a2.9 2.9 0 0 1 0 5.7a2.4 2.9 0 0 1 -4.8 0a2.4 2.9 0 0 1 -4.8 0a2.9 2.9 0 0 1 0 -5.7a2.9 2.9 0 0 1 0 -5.7a2.9 2.9 0 0 1 0 -5.7a2.9 2.9 0 0 1 0 -5.7a2.9 2.9 0 0 1 0 -5.7a2.9 2.9 0 0 1 0 -5.7a2.9 2.9 0 0 1 0 -5.7a2.9 2.9 0 0 1 0 -5.7a2.9 2.9 0 0 1 0 -5.7a2.9 2.9 0 0 1 0 -5.7a2.9 2.9 0 0 1 0 -5.7a2.9 2.9 0 0 1 0 -5.7a2.9 2.9 0 0 1 0 -5.7a2.9 2.9 0 0 1 0 -5.7a2.9 2.9 0 0 1 0 -5.7a2.9 2.9 0 0 1 0 -5.7a2.9 2.9 0 0 1 0 -5.7Z" stroke="#6a6a6a" stroke-width="0.75" fill="none" stroke-dasharray="6 0.8"/><rect x="1280.6" y="1183.6" width="36.2" height="62" stroke="#b99" stroke-width="0.6" fill="#fff"/><rect x="1281.4" y="1184.6" width="16.5" height="17.6" stroke="#888" stroke-width="0.75" fill="#fff"/><path d="M1286.6 1195l4.4 -5.4M1288.4 1196l4.4 -5.4" stroke="#555" stroke-width="0.6" fill="none"/><rect x="1281.4" y="1204.4" width="16.5" height="41.2" stroke="#7a7a7a" stroke-width="0.8" fill="#fff"/><rect x="1283.6" y="1206.6" width="12.1" height="36.8" stroke="#aaa" stroke-width="0.6" fill="none"/><path d="M1286.6 1228l4.4 -5.4M1288.4 1229l4.4 -5.4" stroke="#555" stroke-width="0.6" fill="none"/><path d="M1295.7 1207L1283.6 1225L1295.7 1243" stroke="#aaa" stroke-width="0.5" fill="none" stroke-dasharray="4 1.4"/><rect x="1299.5" y="1184.6" width="16.5" height="17.6" stroke="#888" stroke-width="0.75" fill="#fff"/><path d="M1304.7 1195l4.4 -5.4M1306.5 1196l4.4 -5.4" stroke="#555" stroke-width="0.6" fill="none"/><rect x="1299.5" y="1204.4" width="16.5" height="41.2" stroke="#7a7a7a" stroke-width="0.8" fill="#fff"/><rect x="1301.7" y="1206.6" width="12.1" height="36.8" stroke="#aaa" stroke-width="0.6" fill="none"/><path d="M1304.7 1228l4.4 -5.4M1306.5 1229l4.4 -5.4" stroke="#555" stroke-width="0.6" fill="none"/><path d="M1301.7 1207L1313.8 1225L1301.7 1243" stroke="#aaa" stroke-width="0.5" fill="none" stroke-dasharray="4 1.4"/><path d="M1296.7 1227.6L1300.7 1227.6" stroke="#111" stroke-width="1.1"/><rect x="1411.1" y="1183.6" width="36.9" height="62" stroke="#b99" stroke-width="0.6" fill="#fff"/><rect x="1411.9" y="1184.6" width="16.9" height="17.6" stroke="#888" stroke-width="0.75" fill="#fff"/><path d="M1417.3 1195l4.4 -5.4M1419.1 1196l4.4 -5.4" stroke="#555" stroke-width="0.6" fill="none"/><rect x="1411.9" y="1204.4" width="16.9" height="41.2" stroke="#7a7a7a" stroke-width="0.8" fill="#fff"/><rect x="1414.1" y="1206.6" width="12.5" height="36.8" stroke="#aaa" stroke-width="0.6" fill="none"/><path d="M1417.3 1228l4.4 -5.4M1419.1 1229l4.4 -5.4" stroke="#555" stroke-width="0.6" fill="none"/><path d="M1426.5 1207L1414.1 1225L1426.5 1243" stroke="#aaa" stroke-width="0.5" fill="none" stroke-dasharray="4 1.4"/><rect x="1430.3" y="1184.6" width="16.9" height="17.6" stroke="#888" stroke-width="0.75" fill="#fff"/><path d="M1435.8 1195l4.4 -5.4M1437.6 1196l4.4 -5.4" stroke="#555" stroke-width="0.6" fill="none"/><rect x="1430.3" y="1204.4" width="16.9" height="41.2" stroke="#7a7a7a" stroke-width="0.8" fill="#fff"/><rect x="1432.5" y="1206.6" width="12.5" height="36.8" stroke="#aaa" stroke-width="0.6" fill="none"/><path d="M1435.8 1228l4.4 -5.4M1437.6 1229l4.4 -5.4" stroke="#555" stroke-width="0.6" fill="none"/><path d="M1432.5 1207L1445 1225L1432.5 1243" stroke="#aaa" stroke-width="0.5" fill="none" stroke-dasharray="4 1.4"/><path d="M1427.5 1227.6L1431.5 1227.6" stroke="#111" stroke-width="1.1"/><rect x="1520.3" y="1183.6" width="36.2" height="62" stroke="#b99" stroke-width="0.6" fill="#fff"/><rect x="1521.1" y="1184.6" width="16.5" height="17.6" stroke="#888" stroke-width="0.75" fill="#fff"/><path d="M1526.3 1195l4.4 -5.4M1528.1 1196l4.4 -5.4" stroke="#555" stroke-width="0.6" fill="none"/><rect x="1521.1" y="1204.4" width="16.5" height="41.2" stroke="#7a7a7a" stroke-width="0.8" fill="#fff"/><rect x="1523.3" y="1206.6" width="12.1" height="36.8" stroke="#aaa" stroke-width="0.6" fill="none"/><path d="M1526.3 1228l4.4 -5.4M1528.1 1229l4.4 -5.4" stroke="#555" stroke-width="0.6" fill="none"/><path d="M1535.4 1207L1523.3 1225L1535.4 1243" stroke="#aaa" stroke-width="0.5" fill="none" stroke-dasharray="4 1.4"/><rect x="1539.2" y="1184.6" width="16.5" height="17.6" stroke="#888" stroke-width="0.75" fill="#fff"/><path d="M1544.5 1195l4.4 -5.4M1546.2 1196l4.4 -5.4" stroke="#555" stroke-width="0.6" fill="none"/><rect x="1539.2" y="1204.4" width="16.5" height="41.2" stroke="#7a7a7a" stroke-width="0.8" fill="#fff"/><rect x="1541.4" y="1206.6" width="12.1" height="36.8" stroke="#aaa" stroke-width="0.6" fill="none"/><path d="M1544.5 1228l4.4 -5.4M1546.2 1229l4.4 -5.4" stroke="#555" stroke-width="0.6" fill="none"/><path d="M1541.4 1207L1553.5 1225L1541.4 1243" stroke="#aaa" stroke-width="0.5" fill="none" stroke-dasharray="4 1.4"/><path d="M1536.4 1227.6L1540.4 1227.6" stroke="#111" stroke-width="1.1"/><rect x="1558.3" y="1183.6" width="36.2" height="62" stroke="#b99" stroke-width="0.6" fill="#fff"/><rect x="1559.1" y="1184.6" width="16.5" height="17.6" stroke="#888" stroke-width="0.75" fill="#fff"/><path d="M1564.3 1195l4.4 -5.4M1566.1 1196l4.4 -5.4" stroke="#555" stroke-width="0.6" fill="none"/><rect x="1559.1" y="1204.4" width="16.5" height="41.2" stroke="#7a7a7a" stroke-width="0.8" fill="#fff"/><rect x="1561.3" y="1206.6" width="12.1" height="36.8" stroke="#aaa" stroke-width="0.6" fill="none"/><path d="M1564.3 1228l4.4 -5.4M1566.1 1229l4.4 -5.4" stroke="#555" stroke-width="0.6" fill="none"/><path d="M1573.4 1207L1561.3 1225L1573.4 1243" stroke="#aaa" stroke-width="0.5" fill="none" stroke-dasharray="4 1.4"/><rect x="1577.2" y="1184.6" width="16.5" height="17.6" stroke="#888" stroke-width="0.75" fill="#fff"/><path d="M1582.5 1195l4.4 -5.4M1584.2 1196l4.4 -5.4" stroke="#555" stroke-width="0.6" fill="none"/><rect x="1577.2" y="1204.4" width="16.5" height="41.2" stroke="#7a7a7a" stroke-width="0.8" fill="#fff"/><rect x="1579.4" y="1206.6" width="12.1" height="36.8" stroke="#aaa" stroke-width="0.6" fill="none"/><path d="M1582.5 1228l4.4 -5.4M1584.2 1229l4.4 -5.4" stroke="#555" stroke-width="0.6" fill="none"/><path d="M1579.4 1207L1591.5 1225L1579.4 1243" stroke="#aaa" stroke-width="0.5" fill="none" stroke-dasharray="4 1.4"/><path d="M1574.4 1227.6L1578.4 1227.6" stroke="#111" stroke-width="1.1"/><rect x="1643.2" y="1183.6" width="73.8" height="62" stroke="#b99" stroke-width="0.6" fill="#fff"/><rect x="1644" y="1184.6" width="16.9" height="17.6" stroke="#888" stroke-width="0.75" fill="#fff"/><path d="M1649.4 1195l4.4 -5.4M1651.2 1196l4.4 -5.4" stroke="#555" stroke-width="0.6" fill="none"/><rect x="1644" y="1204.4" width="16.9" height="41.2" stroke="#7a7a7a" stroke-width="0.8" fill="#fff"/><path d="M1649.4 1225l4.4 -5.4M1651.2 1226l4.4 -5.4" stroke="#555" stroke-width="0.6" fill="none"/><rect x="1662.5" y="1184.6" width="16.9" height="17.6" stroke="#888" stroke-width="0.75" fill="#fff"/><path d="M1667.9 1195l4.4 -5.4M1669.7 1196l4.4 -5.4" stroke="#555" stroke-width="0.6" fill="none"/><rect x="1662.5" y="1204.4" width="16.9" height="41.2" stroke="#7a7a7a" stroke-width="0.8" fill="#fff"/><path d="M1667.9 1225l4.4 -5.4M1669.7 1226l4.4 -5.4" stroke="#555" stroke-width="0.6" fill="none"/><rect x="1680.9" y="1184.6" width="16.9" height="17.6" stroke="#888" stroke-width="0.75" fill="#fff"/><path d="M1686.3 1195l4.4 -5.4M1688.1 1196l4.4 -5.4" stroke="#555" stroke-width="0.6" fill="none"/><rect x="1680.9" y="1204.4" width="16.9" height="41.2" stroke="#7a7a7a" stroke-width="0.8" fill="#fff"/><path d="M1686.3 1225l4.4 -5.4M1688.1 1226l4.4 -5.4" stroke="#555" stroke-width="0.6" fill="none"/><rect x="1699.3" y="1184.6" width="16.9" height="17.6" stroke="#888" stroke-width="0.75" fill="#fff"/><path d="M1704.8 1195l4.4 -5.4M1706.6 1196l4.4 -5.4" stroke="#555" stroke-width="0.6" fill="none"/><rect x="1699.3" y="1204.4" width="16.9" height="41.2" stroke="#7a7a7a" stroke-width="0.8" fill="#fff"/><path d="M1704.8 1225l4.4 -5.4M1706.6 1226l4.4 -5.4" stroke="#555" stroke-width="0.6" fill="none"/><rect x="1117" y="1188.5" width="36.9" height="61.7" stroke="#888" stroke-width="0.6" fill="#fff"/><rect x="1117.8" y="1189.6" width="17.4" height="18" stroke="#888" stroke-width="0.75" fill="#fff"/><path d="M1123.5 1200l4.4 -5.4M1125.3 1201l4.4 -5.4" stroke="#555" stroke-width="0.6" fill="none"/><rect x="1117.8" y="1210" width="17.4" height="40.2" stroke="#7a7a7a" stroke-width="0.8" fill="#fff"/><rect x="1120.2" y="1212.4" width="12.6" height="35.4" stroke="#aaa" stroke-width="0.6" fill="none"/><path d="M1123.5 1232l4.4 -5.4M1125.3 1233l4.4 -5.4" stroke="#555" stroke-width="0.6" fill="none"/><rect x="1135.8" y="1189.6" width="17.4" height="18" stroke="#888" stroke-width="0.75" fill="#fff"/><path d="M1141.5 1200l4.4 -5.4M1143.3 1201l4.4 -5.4" stroke="#555" stroke-width="0.6" fill="none"/><rect x="1135.8" y="1210" width="17.4" height="40.2" stroke="#7a7a7a" stroke-width="0.8" fill="#fff"/><rect x="1138.2" y="1212.4" width="12.6" height="35.4" stroke="#aaa" stroke-width="0.6" fill="none"/><path d="M1141.5 1232l4.4 -5.4M1143.3 1233l4.4 -5.4" stroke="#555" stroke-width="0.6" fill="none"/><path d="M1133.4 1232.4L1137.6 1232.4" stroke="#111" stroke-width="1.1"/><path d="M1066.7 1206.8a2.8 2.9 0 0 1 5.7 0a2.8 2.9 0 0 1 5.7 0a2.8 2.9 0 0 1 5.7 0a2.8 2.9 0 0 1 5.7 0a2.8 2.9 0 0 1 5.7 0a2.8 2.9 0 0 1 5.7 0a2.8 2.9 0 0 1 5.7 0a2.8 2.9 0 0 1 5.7 0a2.9 2.8 0 0 1 0 5.6a2.9 2.8 0 0 1 0 5.6a2.9 2.8 0 0 1 0 5.6a2.9 2.8 0 0 1 0 5.6a2.9 2.8 0 0 1 0 5.6a2.9 2.8 0 0 1 0 5.6a2.8 2.9 0 0 1 -5.7 0a2.8 2.9 0 0 1 -5.7 0a2.8 2.9 0 0 1 -5.7 0a2.8 2.9 0 0 1 -5.7 0a2.8 2.9 0 0 1 -5.7 0a2.8 2.9 0 0 1 -5.7 0a2.8 2.9 0 0 1 -5.7 0a2.8 2.9 0 0 1 -5.7 0a2.9 2.8 0 0 1 0 -5.6a2.9 2.8 0 0 1 0 -5.6a2.9 2.8 0 0 1 0 -5.6a2.9 2.8 0 0 1 0 -5.6a2.9 2.8 0 0 1 0 -5.6a2.9 2.8 0 0 1 0 -5.6Z" stroke="#6a6a6a" stroke-width="0.75" fill="none" stroke-dasharray="6 0.8"/><rect x="1071.3" y="1211.4" width="36.2" height="24.4" stroke="#666" stroke-width="0.9" fill="#fff"/><rect x="1072.7" y="1212.8" width="19.2" height="21.6" stroke="#777" stroke-width="0.7" fill="#fff"/><path d="M1079.5 1225.6l4.6 -3.2M1081.3 1226.4l4.6 -3.2" stroke="#555" stroke-width="0.7" fill="none"/><rect x="1093.3" y="1212.8" width="12.8" height="21.6" stroke="#777" stroke-width="0.7" fill="#fff"/><rect x="1094.7" y="1214.2" width="10" height="18.8" stroke="#888" stroke-width="0.6" fill="#f2f2f2"/><path d="M1096.9 1225.6l4.6 -3.2M1098.7 1226.4l4.6 -3.2" stroke="#555" stroke-width="0.7" fill="none"/><path d="M1182.8 1206.8a2.8 2.9 0 0 1 5.7 0a2.8 2.9 0 0 1 5.7 0a2.8 2.9 0 0 1 5.7 0a2.8 2.9 0 0 1 5.7 0a2.8 2.9 0 0 1 5.7 0a2.8 2.9 0 0 1 5.7 0a2.8 2.9 0 0 1 5.7 0a2.8 2.9 0 0 1 5.7 0a2.9 2.8 0 0 1 0 5.6a2.9 2.8 0 0 1 0 5.6a2.9 2.8 0 0 1 0 5.6a2.9 2.8 0 0 1 0 5.6a2.9 2.8 0 0 1 0 5.6a2.9 2.8 0 0 1 0 5.6a2.8 2.9 0 0 1 -5.7 0a2.8 2.9 0 0 1 -5.7 0a2.8 2.9 0 0 1 -5.7 0a2.8 2.9 0 0 1 -5.7 0a2.8 2.9 0 0 1 -5.7 0a2.8 2.9 0 0 1 -5.7 0a2.8 2.9 0 0 1 -5.7 0a2.8 2.9 0 0 1 -5.7 0a2.9 2.8 0 0 1 0 -5.6a2.9 2.8 0 0 1 0 -5.6a2.9 2.8 0 0 1 0 -5.6a2.9 2.8 0 0 1 0 -5.6a2.9 2.8 0 0 1 0 -5.6a2.9 2.8 0 0 1 0 -5.6Z" stroke="#6a6a6a" stroke-width="0.75" fill="none" stroke-dasharray="6 0.8"/><rect x="1187.4" y="1211.4" width="36.1" height="24.4" stroke="#666" stroke-width="0.9" fill="#fff"/><rect x="1188.8" y="1212.8" width="19.2" height="21.6" stroke="#777" stroke-width="0.7" fill="#fff"/><path d="M1195.6 1225.6l4.6 -3.2M1197.4 1226.4l4.6 -3.2" stroke="#555" stroke-width="0.7" fill="none"/><rect x="1209.4" y="1212.8" width="12.7" height="21.6" stroke="#777" stroke-width="0.7" fill="#fff"/><rect x="1210.8" y="1214.2" width="9.9" height="18.8" stroke="#888" stroke-width="0.6" fill="#f2f2f2"/><path d="M1213 1225.6l4.6 -3.2M1214.8 1226.4l4.6 -3.2" stroke="#555" stroke-width="0.7" fill="none"/><path d="M981 1253.6H1004V1241.6H1034" stroke="#333" stroke-width="1" fill="none"/><path d="M1034 1253.6L1165 1252L1236 1247L1300 1246.4H1800" stroke="#2a2a2a" stroke-width="1.05" fill="none"/><path d="M1064.4 1209V1253.6M1058 1209H1068" stroke="#333" stroke-width="0.8" fill="none"/><path d="M1061.8 1211.6L1067 1206.4" stroke="#222" stroke-width="1.1"/><path d="M1061.8 1256.2L1067 1251" stroke="#222" stroke-width="1.1"/><text x="1061.6" y="1233" font-size="8.5" text-anchor="middle" transform="rotate(-90 1061.6 1233)">7'-0"</text><path d="M1512.8 1183.6V1246.4" stroke="#333" stroke-width="0.8" fill="none"/><path d="M1510.2 1186.2L1515.4 1181" stroke="#222" stroke-width="1.1"/><path d="M1510.2 1249L1515.4 1243.8" stroke="#222" stroke-width="1.1"/><text x="1510" y="1213" font-size="8.5" text-anchor="middle" transform="rotate(-90 1510 1213)">11'-0"</text><path d="M1748.6 1113.9H1793M1750 1152H1774M1752 1246.4H1793" stroke="#999" stroke-width="0.7" fill="none"/><path d="M1767.7 1152V1246.4M1786.7 1113.9V1246.4" stroke="#888" stroke-width="0.8" fill="none"/><path d="M1765.1 1154.6L1770.3 1149.4" stroke="#222" stroke-width="1.1"/><path d="M1765.1 1249L1770.3 1243.8" stroke="#222" stroke-width="1.1"/><path d="M1784.1 1116.5L1789.3 1111.3" stroke="#222" stroke-width="1.1"/><path d="M1784.1 1249L1789.3 1243.8" stroke="#222" stroke-width="1.1"/><text x="1764.8" y="1198" font-size="8.5" text-anchor="middle" transform="rotate(-90 1764.8 1198)">15'-5"</text><text x="1783.8" y="1182" font-size="8.5" text-anchor="middle" transform="rotate(-90 1783.8 1182)">21'-6"</text><text x="1788.6" y="1111.4" font-size="8.4" textLength="43.6" lengthAdjust="spacingAndGlyphs">T.O. ROOF</text><path d="M1788 1113.9L1834 1113.9" stroke="#555" stroke-width="0.7" stroke-dasharray="5 2"/><circle cx="1836.6" cy="1113.9" r="2.9" fill="#fff" stroke="#111" stroke-width="0.8"/><path d="M1836.6 1113.9v-2.9a2.9 2.9 0 0 0 -2.9 2.9ZM1836.6 1113.9v2.9a2.9 2.9 0 0 0 2.9 -2.9Z" fill="#111"/><text x="1795.4" y="1243.8" font-size="8.4" textLength="37" lengthAdjust="spacingAndGlyphs">MUR F.F.</text><text x="1805.8" y="1254.6" font-size="8.4" textLength="26.4" lengthAdjust="spacingAndGlyphs">+10.70</text><path d="M1793 1246.4L1834 1246.4" stroke="#555" stroke-width="0.7"/><circle cx="1836.6" cy="1246.4" r="2.9" fill="#fff" stroke="#111" stroke-width="0.8"/><path d="M1836.6 1246.4v-2.9a2.9 2.9 0 0 0 -2.9 2.9ZM1836.6 1246.4v2.9a2.9 2.9 0 0 0 2.9 -2.9Z" fill="#111"/><text x="1478.6" y="1051.4" font-size="8.5" textLength="64" lengthAdjust="spacingAndGlyphs">SKYLIGHT, TYP</text><path d="M1474 1048.6C1450 1050 1452 1100 1430.4 1126" stroke="#555" stroke-width="0.7" fill="none"/><path d="M1429.6 1127L1431.6 1122.2L1433.8 1123.9Z" fill="#222"/><text x="1200.6" y="1094.6" font-size="8.5" textLength="93" lengthAdjust="spacingAndGlyphs">SUPPORT LOCATIONS</text><path d="M1196 1091.6C1160 1092 1150 1150 1120.4 1181M1196 1091.6C1172 1094 1178 1150 1167.8 1179" stroke="#555" stroke-width="0.7" fill="none"/><path d="M1119.4 1182L1121.9 1177.4L1123.9 1179.4Z" fill="#222"/><path d="M1167.4 1180.4L1167.6 1175.2L1170.3 1176.1Z" fill="#222"/><text x="1836.9" y="1087.8" font-size="8.5" textLength="72" lengthAdjust="spacingAndGlyphs">STANDING SEAM</text><text x="1836.9" y="1098.2" font-size="8.5" textLength="93" lengthAdjust="spacingAndGlyphs">METAL ROOFING, TYP</text><path d="M1832 1084.6C1790 1086 1770 1120 1741.4 1141" stroke="#555" stroke-width="0.7" fill="none"/><path d="M1740.4 1141.8L1743.6 1137.7L1745.3 1140Z" fill="#222"/><text x="1836.2" y="1127" font-size="8.5" textLength="62.6" lengthAdjust="spacingAndGlyphs">RIBBED METAL</text><text x="1836.2" y="1137.4" font-size="8.5" textLength="81.6" lengthAdjust="spacingAndGlyphs">PANEL SIDING, TYP</text><path d="M1832 1123.8C1790 1126 1760 1160 1711.4 1168.6" stroke="#555" stroke-width="0.7" fill="none"/><path d="M1710 1169L1714.8 1166.9L1715.1 1169.7Z" fill="#222"/><text x="1427.9" y="1257.8" font-size="8.5" textLength="65.6" lengthAdjust="spacingAndGlyphs">CANTILEVERED</text><text x="1427.9" y="1268.2" font-size="8.5" textLength="41.4" lengthAdjust="spacingAndGlyphs">SUPPORT</text><path d="M1424 1254.6C1395 1252 1385 1205 1365.4 1186" stroke="#555" stroke-width="0.7" fill="none"/><path d="M1364.6 1185L1369.1 1187.5L1367.1 1189.5Z" fill="#222"/><rect x="1835.9" y="1041.6" width="37" height="11.6" rx="5.8" fill="#fff" stroke="#777" stroke-width="0.8"/><text x="1854.4" y="1050.4" font-size="8.3" text-anchor="middle">26.02</text><text x="1876" y="1050.4" font-size="8.3">TYP</text><rect x="1835.9" y="1060.6" width="37" height="11.6" rx="5.8" fill="#fff" stroke="#777" stroke-width="0.8"/><text x="1854.4" y="1069.4" font-size="8.3" text-anchor="middle">7.01</text><rect x="1835.9" y="1146.2" width="37" height="11.6" rx="5.8" fill="#fff" stroke="#777" stroke-width="0.8"/><text x="1854.4" y="1155" font-size="8.3" text-anchor="middle">8.05</text><rect x="1835.9" y="1173.6" width="37" height="11.6" rx="5.8" fill="#fff" stroke="#777" stroke-width="0.8"/><text x="1854.4" y="1182.4" font-size="8.3" text-anchor="middle">7.04</text><text x="1876" y="1182.4" font-size="8.3">TYP.</text><rect x="1835.9" y="1199.8" width="37" height="11.6" rx="5.8" fill="#fff" stroke="#777" stroke-width="0.8"/><text x="1854.4" y="1208.6" font-size="8.3" text-anchor="middle">8.02</text><text x="1876" y="1208.6" font-size="8.3">ALT.</text><rect x="1835.9" y="1223.4" width="37" height="11.6" rx="5.8" fill="#fff" stroke="#777" stroke-width="0.8"/><text x="1854.4" y="1232.2" font-size="8.3" text-anchor="middle">5.05</text><rect x="1650.2" y="1068.2" width="37" height="11.6" rx="5.8" fill="#fff" stroke="#777" stroke-width="0.8"/><text x="1668.7" y="1077" font-size="8.3" text-anchor="middle">8.06</text><text x="1690.4" y="1077" font-size="8.3">TYP</text><rect x="1650.2" y="1253.9" width="37" height="11.6" rx="5.8" fill="#fff" stroke="#777" stroke-width="0.8"/><text x="1668.7" y="1262.7" font-size="8.3" text-anchor="middle">8.05</text><text x="1690.4" y="1262.7" font-size="8.3">TYP</text><rect x="1650.2" y="1266.4" width="37" height="11.6" rx="5.8" fill="#fff" stroke="#777" stroke-width="0.8"/><text x="1668.7" y="1275.2" font-size="8.3" text-anchor="middle">8.02</text><text x="1690.4" y="1275.2" font-size="8.3">TYP</text><rect x="1103.5" y="1266.4" width="37" height="11.6" rx="5.8" fill="#fff" stroke="#777" stroke-width="0.8"/><text x="1122" y="1275.2" font-size="8.3" text-anchor="middle">3.06</text><rect x="1428" y="1272.2" width="37" height="11.6" rx="5.8" fill="#fff" stroke="#777" stroke-width="0.8"/><text x="1446.5" y="1281" font-size="8.3" text-anchor="middle">7.04</text><path d="M1835.8 1047.4C1770 1050 1730 1140 1682.4 1176" stroke="#555" stroke-width="0.7" fill="none"/><path d="M1681.4 1176.8L1684.5 1172.6L1686.2 1174.8Z" fill="#222"/><path d="M1835.8 1066.4C1790 1068 1765 1120 1731.4 1140.6" stroke="#555" stroke-width="0.7" fill="none"/><path d="M1730.4 1141.2L1733.9 1137.4L1735.4 1139.7Z" fill="#222"/><path d="M1835.8 1152C1790 1154 1760 1190 1700.4 1199" stroke="#555" stroke-width="0.7" fill="none"/><path d="M1699 1199.2L1703.8 1197.1L1704.1 1199.9Z" fill="#222"/><path d="M1835.8 1179.4C1800 1181 1780 1200 1742.4 1204.6" stroke="#555" stroke-width="0.7" fill="none"/><path d="M1741 1204.8L1745.8 1202.9L1746.1 1205.7Z" fill="#222"/><path d="M1835.8 1205.6C1790 1207 1760 1220 1700.4 1224.6" stroke="#555" stroke-width="0.7" fill="none"/><path d="M1699 1224.8L1703.9 1223.1L1704.1 1225.8Z" fill="#222"/><path d="M1835.8 1229.2C1800 1230 1770 1232 1720.4 1234" stroke="#555" stroke-width="0.7" fill="none"/><path d="M1719 1234L1723.9 1232.4L1724 1235.2Z" fill="#222"/><path d="M1650.2 1074C1615 1076 1600 1110 1573.4 1121.4" stroke="#555" stroke-width="0.7" fill="none"/><path d="M1572.4 1121.8L1576.5 1118.6L1577.6 1121.2Z" fill="#222"/><path d="M1650.2 1259.7C1610 1258 1600 1215 1572.4 1196" stroke="#555" stroke-width="0.7" fill="none"/><path d="M1571.4 1195.2L1576.3 1196.8L1574.8 1199.2Z" fill="#222"/><path d="M1650.2 1272.2C1610 1271 1595 1250 1568.4 1241" stroke="#555" stroke-width="0.7" fill="none"/><path d="M1567.4 1240.6L1572.6 1241L1571.6 1243.6Z" fill="#222"/><path d="M1103.4 1272.2C1085 1271 1078 1258 1067.4 1250" stroke="#555" stroke-width="0.7" fill="none"/><path d="M1066.4 1249.2L1071.2 1251.2L1069.5 1253.4Z" fill="#222"/><path d="M1428 1278C1400 1277 1390 1258 1374.4 1248.6" stroke="#555" stroke-width="0.7" fill="none"/><path d="M1373.4 1248L1378.4 1249.5L1376.9 1251.8Z" fill="#222"/><path d="M1775.7 1291.5L1784.2 1277.5L1792.7 1291.5Z" fill="#fff" stroke="#666" stroke-width="0.8"/><text x="1784.2" y="1289.5" font-size="7.6" text-anchor="middle" fill="#333">2</text><circle cx="1039" cy="1320.6" r="15.2" fill="#fff" stroke="#555" stroke-width="0.9"/><path d="M1023.8 1320.6L1800 1320.6" stroke="#555" stroke-width="0.9"/><text x="1039" y="1317" font-size="10" text-anchor="middle">1</text><text x="1039" y="1328.2" font-size="5.8" text-anchor="middle" fill="#333">A3.01</text><text x="1057.4" y="1318.1" font-size="11.4" textLength="181.4" lengthAdjust="spacingAndGlyphs">BUILDING 1 - NORTH ELEVATION</text><text x="1057.4" y="1329.2" font-size="7.4" textLength="76" lengthAdjust="spacingAndGlyphs">SCALE:  1/8" = 1'-0"</text><text x="1963.6" y="336.4" font-size="11" textLength="62.4" lengthAdjust="spacingAndGlyphs">KEYNOTES</text><rect x="2035.4" y="325.8" width="37.6" height="11.6" rx="5.8" fill="#fff" stroke="#888" stroke-width="0.7"/><path d="M2051 331.6L2057 331.6" stroke="#999" stroke-width="0.7"/><text x="1963.6" y="356.8" font-size="9.4" textLength="102.4" lengthAdjust="spacingAndGlyphs">PLANS &amp; ELEVATIONS</text><path d="M1963.6 358.8L2066 358.8" stroke="#444" stroke-width="0.7"/><g font-size="7.85" fill="#2a2a2a"><text x="1963.8" y="370.3">3.01</text><text x="1987.4" y="370.3">CONCRETE WALL (SSD)</text><text x="1963.8" y="379.3">3.02</text><text x="1987.4" y="379.3">CONCRETE STAIR (SSD)</text><text x="1963.8" y="388.3">3.03</text><text x="1987.4" y="388.3">SLAB-ON GRADE CONCRETE (SCD, SSD)</text><text x="1963.8" y="397.3">3.04</text><text x="1987.4" y="397.3">CONC PLANTER W/ CURBS (SLD, SCD)</text><text x="1963.8" y="406.3">3.05</text><text x="1987.4" y="406.3">CONTROL JOINT</text><text x="1963.8" y="415.3">3.06</text><text x="1987.4" y="415.3">CONCRETE CURB (SCD, SSD)</text><text x="1963.8" y="424.3">3.07</text><text x="1987.4" y="424.3">CONCRETE FOUNDATION (SSD)</text><text x="1963.8" y="433.3">3.08</text><text x="1987.4" y="433.3">TROWEL CONC STAIR NOSING (SCD)</text><text x="1963.8" y="442.3">3.09</text><text x="1987.4" y="442.3">RUNNEL (SCD)</text><text x="1963.8" y="460.4">5.01</text><text x="1987.4" y="460.4">METAL GUARDRAIL</text><text x="1963.8" y="469.4">5.02</text><text x="1987.4" y="469.4">METAL HANDRAIL</text><text x="1963.8" y="478.4">5.03</text><text x="1987.4" y="478.4">STRUCTURAL STEEL (SSD)</text><text x="1963.8" y="487.4">5.04</text><text x="1987.4" y="487.4">SHEET METAL</text><text x="1963.8" y="496.4">5.05</text><text x="1987.4" y="496.4">RIBBED METAL PANEL SIDING</text><text x="1963.8" y="505.4">5.06</text><text x="1987.4" y="505.4">PERFORATED METAL FIN</text><text x="1963.8" y="514.4">5.07</text><text x="1987.4" y="514.4">EXPOSED METAL DECKING</text><text x="1963.8" y="532.4">6.01</text><text x="1987.4" y="532.4">WOOD SIDING</text><text x="1963.8" y="541.4">6.02</text><text x="1987.4" y="541.4">WOOD POST (SSD)</text><text x="1963.8" y="550.4">6.03</text><text x="1987.4" y="550.4">EXPOSED WOOD BEAM (SSD)</text><text x="1963.8" y="559.4">6.04</text><text x="1987.4" y="559.4">EXPOSED WOOD RAFTERS (SSD)</text><text x="1963.8" y="568.4">6.05</text><text x="1987.4" y="568.4">PLYWOOD PANEL</text><text x="1963.8" y="577.4">6.06</text><text x="1987.4" y="577.4">P-LAM COUNTERTOP</text><text x="1963.8" y="586.4">6.07</text><text x="1987.4" y="586.4">WOOD 3X DECKING</text><text x="1963.8" y="595.5">6.08</text><text x="1987.4" y="595.5">WOOD TRIM</text><text x="1963.8" y="604.5">6.09</text><text x="1987.4" y="604.5">BUILT-IN CASEWORK</text><text x="1963.8" y="613.5">6.10</text><text x="1987.4" y="613.5">FURNISHING (ALLOWANCE)</text><text x="1963.8" y="631.5">7.01</text><text x="1987.4" y="631.5">STANDING SEAM METAL ROOF</text><text x="1963.8" y="640.5">7.02</text><text x="1987.4" y="640.5">SHEET METAL GUTTER</text><text x="1963.8" y="649.5">7.03</text><text x="1987.4" y="649.5">SHEET METAL FLASHING</text><text x="1963.8" y="658.5">7.04</text><text x="1987.4" y="658.5">METAL PIPE DOWNSPOUT</text><text x="1963.8" y="667.5">7.05</text><text x="1987.4" y="667.5">ROOF VENTS</text><text x="1963.8" y="676.5">7.06</text><text x="1987.4" y="676.5">INSULATION</text><text x="1963.8" y="685.5">7.07</text><text x="1987.4" y="685.5">ALUMINUM REGLET TRIM</text><text x="1963.8" y="703.5">8.01</text><text x="1987.4" y="703.5">METAL DOORS AND FRAMES</text><text x="1963.8" y="712.5">8.02</text><text x="1987.4" y="712.5">METAL &amp; GLASS DOORS AND FRAMES</text><text x="1963.8" y="721.5">8.03</text><text x="1987.4" y="721.5">SOLID WOOD DOORS</text><text x="1963.8" y="730.5">8.04</text><text x="1987.4" y="730.5">ACCESS DOORS AND PANELS</text><text x="1963.8" y="739.5">8.05</text><text x="1987.4" y="739.5">WINDOWS AND FRAMES</text><text x="1963.8" y="748.6">8.06</text><text x="1987.4" y="748.6">METAL AND PLASTIC SKYLIGHTS</text><text x="1963.8" y="757.6">8.07</text><text x="1987.4" y="757.6">SUPPLY AIR</text><text x="1963.8" y="775.6">9.01</text><text x="1987.4" y="775.6">GYPSUM BOARD</text><text x="1963.8" y="784.6">9.02</text><text x="1987.4" y="784.6">LINED INSULATION</text><text x="1963.8" y="793.6">9.03</text><text x="1987.4" y="793.6">FRP O/ GYP BD</text><text x="1963.8" y="802.6">9.04</text><text x="1987.4" y="802.6">SUSPENDED ACOUSTICAL CEILING TILES</text><text x="1963.8" y="811.6">9.05</text><text x="1987.4" y="811.6">SUSPENDED GYPSUM BOARD CEILING</text><text x="1963.8" y="820.6">9.06</text><text x="1987.4" y="820.6">RUBBER BASE</text><text x="1963.8" y="829.6">9.07</text><text x="1987.4" y="829.6">TILE WAINSCOT</text><text x="1963.8" y="838.6">9.08</text><text x="1987.4" y="838.6">COVED TILE BASE</text><text x="1963.8" y="856.6">10.01</text><text x="1987.2" y="856.6">ROOM SIGNAGE</text><text x="1963.8" y="865.6">10.02</text><text x="1987.2" y="865.6">ACCESSIBLE ENTRANCE SIGNAGE</text><text x="1963.8" y="874.6">10.03</text><text x="1987.2" y="874.6">TOILET AND BATH ACCESSORIES</text><text x="1963.8" y="883.6">10.04</text><text x="1987.2" y="883.6">TOILET PARTITIONS</text><text x="1963.8" y="892.6">10.05</text><text x="1987.2" y="892.6">FIRE EXTINGUISHER CABINET</text><text x="1963.8" y="901.7">10.06</text><text x="1987.2" y="901.7">METAL SHELVING</text><text x="1963.8" y="910.7">10.07</text><text x="1987.2" y="910.7">FIRE DEPT. KNOX BOX</text><text x="1963.8" y="928.7">12.01</text><text x="1987.2" y="928.7">RESIDENTIAL APPLIANCES</text><text x="1963.8" y="937.7">12.02</text><text x="1987.2" y="937.7">BICYCLE RACKS</text><text x="1963.8" y="946.7">12.03</text><text x="1987.2" y="946.7">TRASH &amp; RECYCLING RECEPTACLES</text><text x="1963.8" y="964.7">21.01</text><text x="1987.2" y="964.7">FIRE SPRINKLER RISER</text><text x="1963.8" y="973.7">21.02</text><text x="1987.2" y="973.7">FIRE SPRINKLER HEAD</text><text x="1963.8" y="982.7">21.03</text><text x="1987.2" y="982.7">FIRE HYDRANT</text><text x="1963.8" y="1000.7">22.01</text><text x="1987.2" y="1000.7">PLUMBING FIXTURES &amp; FITTINGS (SPD)</text><text x="1963.8" y="1009.7">22.02</text><text x="1987.2" y="1009.7">HOSE BIBB (SPD)</text><text x="1963.8" y="1018.7">22.03</text><text x="1987.2" y="1018.7">PLUMBING ROOF VENT (SPD)</text><text x="1963.8" y="1027.7">22.04</text><text x="1987.2" y="1027.7">RAINWATER SYSTEM (SPD)</text><text x="1963.8" y="1045.8">23.01</text><text x="1987.2" y="1045.8">MECHANICAL ROOF VENT (SMD)</text><text x="1963.8" y="1054.8">23.02</text><text x="1987.2" y="1054.8">MECHANICAL RADIATOR (SMD)</text><text x="1963.8" y="1063.8">23.04</text><text x="1987.2" y="1063.8">EXHAUST FAN (SMD)</text><text x="1963.8" y="1072.8">23.05</text><text x="1987.2" y="1072.8">MECHANICAL UNIT (SMD)</text><text x="1963.8" y="1090.8">26.01</text><text x="1987.2" y="1090.8">ELECTRICAL EQUIPMENT, DEVICES (SED)</text><text x="1963.8" y="1099.8">26.02</text><text x="1987.2" y="1099.8">LIGHTING FIXTURE (SED)</text><text x="1963.8" y="1108.8">26.03</text><text x="1987.2" y="1108.8">FIRE ALARM SYSTEM</text><text x="1963.8" y="1117.8">26.04</text><text x="1987.2" y="1117.8">CEILING FAN</text><text x="1963.8" y="1126.8">26.05</text><text x="1987.2" y="1126.8">PV PANELS, BY OWNER</text><text x="1963.8" y="1135.8">26.07</text><text x="1987.2" y="1135.8">WEATHER STATION</text><text x="1963.8" y="1153.8">27.01</text><text x="1987.2" y="1153.8">AUDIO-VIDEO DEVICES, BY OWNER</text><text x="1963.8" y="1162.8">27.02</text><text x="1987.2" y="1162.8">DATA DEVICE, BY OWNER</text><text x="1963.8" y="1171.8">27.03</text><text x="1987.2" y="1171.8">CONDUIT, RING &amp; STRING</text><text x="1963.8" y="1189.8">32.01</text><text x="1987.2" y="1189.8">(E) ASPHALT, PATCH AS REQD (SCD), BO</text><text x="1963.8" y="1198.9">32.02</text><text x="1987.2" y="1198.9">PERMEABLE PAVERS</text><text x="1963.8" y="1207.9">32.04</text><text x="1987.2" y="1207.9">METAL GREEN SCREEN DEVICE</text><text x="1963.8" y="1216.9">32.05</text><text x="1987.2" y="1216.9">IRRIGATION (SLD)</text><text x="1963.8" y="1225.9">32.06</text><text x="1987.2" y="1225.9">PLANTING, BY OWNER</text><text x="1963.8" y="1234.9">32.07</text><text x="1987.2" y="1234.9">METAL FENCING &amp; GATE</text><text x="1963.8" y="1243.9">32.08</text><text x="1987.2" y="1243.9">DECOMPOSED GRANITE (SLD)</text><text x="1963.8" y="1252.9">32.09</text><text x="1987.2" y="1252.9">PAVEMENT STRIPING, BY OWNER</text><text x="1963.8" y="1261.9">32.10</text><text x="1987.2" y="1261.9">BIOSWALE (SLD, SCD)</text><text x="1963.8" y="1279.9">33.01</text><text x="1987.2" y="1279.9">FOUNDATION DRAINAGE</text><text x="1963.8" y="1288.9">33.02</text><text x="1987.2" y="1288.9">STORM DRAIN (SCD), BY OWNER</text></g><path d="M2154.7 716L2277.8 716" stroke="#555" stroke-width="1"/><path d="M2154.7 789.5L2277.8 789.5" stroke="#555" stroke-width="1"/><path d="M2154.7 875.3L2277.8 875.3" stroke="#555" stroke-width="1"/><path d="M2154.7 985.7L2277.8 985.7" stroke="#555" stroke-width="1"/><path d="M2154.7 1096L2277.8 1096" stroke="#555" stroke-width="1"/><path d="M2154.7 1157.7L2277.8 1157.7" stroke="#555" stroke-width="1"/><path d="M2154.7 1170.3L2277.8 1170.3" stroke="#555" stroke-width="1"/><path d="M2154.7 1182.4L2277.8 1182.4" stroke="#555" stroke-width="1"/><path d="M2154.7 1194.6L2277.8 1194.6" stroke="#555" stroke-width="1"/><path d="M2154.7 1207.2L2277.8 1207.2" stroke="#555" stroke-width="1"/><path d="M2154.7 1219.3L2277.8 1219.3" stroke="#555" stroke-width="1"/><path d="M2154.7 1231.5L2277.8 1231.5" stroke="#555" stroke-width="1"/><path d="M2154.7 1292.8L2277.8 1292.8" stroke="#555" stroke-width="1"/><text x="2158.6" y="332.6" font-size="6.2" fill="#333">Project Title:</text><text x="2158.6" y="725.6" font-size="6.2" fill="#333">Design Firm:</text><text x="2158.6" y="799" font-size="6.2" fill="#333">Consultant:</text><text x="2158.6" y="884.6" font-size="6.2" fill="#333">Stamp:</text><path d="M2154.7 980.4L2277.8 980.4" stroke="#555" stroke-width="0.9"/><path d="M2154.7 994.5L2277.8 994.5" stroke="#777" stroke-width="0.7"/><path d="M2154.7 1003L2277.8 1003" stroke="#777" stroke-width="0.7"/><path d="M2154.7 1011.4L2277.8 1011.4" stroke="#777" stroke-width="0.7"/><path d="M2154.7 1019.9L2277.8 1019.9" stroke="#777" stroke-width="0.7"/><path d="M2154.7 1028.3L2277.8 1028.3" stroke="#777" stroke-width="0.7"/><path d="M2154.7 1036.8L2277.8 1036.8" stroke="#777" stroke-width="0.7"/><path d="M2154.7 1045.3L2277.8 1045.3" stroke="#777" stroke-width="0.7"/><path d="M2154.7 1053.7L2277.8 1053.7" stroke="#777" stroke-width="0.7"/><path d="M2154.7 1062.2L2277.8 1062.2" stroke="#777" stroke-width="0.7"/><path d="M2154.7 1070.6L2277.8 1070.6" stroke="#777" stroke-width="0.7"/><path d="M2154.7 1079.1L2277.8 1079.1" stroke="#777" stroke-width="0.7"/><path d="M2154.7 1087.6L2277.8 1087.6" stroke="#777" stroke-width="0.7"/><path d="M2167.4 985.7L2167.4 1096" stroke="#666" stroke-width="0.8"/><path d="M2246.5 985.7L2246.5 1096" stroke="#666" stroke-width="0.8"/><text x="2155.6" y="992.6" font-size="6" font-weight="bold">No.</text><text x="2169.4" y="992.6" font-size="6" font-weight="bold">Description</text><text x="2249" y="992.6" font-size="6" font-weight="bold">Date</text><text x="2161" y="1001.4" font-size="5.6" text-anchor="middle" font-weight="bold">1</text><text x="2169.4" y="1001.4" font-size="5.6" font-weight="bold" textLength="73" lengthAdjust="spacingAndGlyphs">PERMIT RESUBMITTAL</text><text x="2248.6" y="1001.4" font-size="5.4" font-weight="bold" textLength="26.6" lengthAdjust="spacingAndGlyphs">09/10/14</text><text x="2161" y="1009.9" font-size="5.6" text-anchor="middle" font-weight="bold">2</text><text x="2169.4" y="1009.9" font-size="5.6" font-weight="bold" textLength="67" lengthAdjust="spacingAndGlyphs">CONSTRUCTION SET</text><text x="2248.6" y="1009.9" font-size="5.4" font-weight="bold" textLength="26.6" lengthAdjust="spacingAndGlyphs">10/30/14</text><text x="2161" y="1018.3" font-size="5.6" text-anchor="middle" font-weight="bold">3</text><text x="2169.4" y="1018.3" font-size="5.6" font-weight="bold" textLength="37" lengthAdjust="spacingAndGlyphs">REVISIONS</text><text x="2248.6" y="1018.3" font-size="5.4" font-weight="bold" textLength="26.6" lengthAdjust="spacingAndGlyphs">03/24/15</text><text x="2158.6" y="1105.6" font-size="6.2" fill="#333">Issue Note:</text><text x="2216.2" y="1117.8" font-size="12.6" text-anchor="middle" textLength="102" lengthAdjust="spacingAndGlyphs">CONSTRUCTION</text><text x="2216.2" y="1132.2" font-size="12.6" text-anchor="middle" textLength="26" lengthAdjust="spacingAndGlyphs">SET</text><text x="2216.2" y="1148.6" font-size="12.2" text-anchor="middle" textLength="63" lengthAdjust="spacingAndGlyphs">10/30/2014</text><text x="2157.6" y="1165.6" font-size="6.2" fill="#333">Project ID:</text><text x="2157.6" y="1178.2" font-size="6.2" fill="#333">File Name:</text><text x="2272.2" y="1179.6" font-size="7.8" text-anchor="end">VA_A03.01</text><text x="2157.6" y="1190.4" font-size="6.2" fill="#333">Drawn by:</text><text x="2272.2" y="1191.8" font-size="7.8" text-anchor="end">VAO</text><text x="2157.6" y="1202.6" font-size="6.2" fill="#333">Checked by:</text><text x="2157.6" y="1214.8" font-size="6.2" fill="#333">Plot Date:</text><text x="2157.6" y="1227.2" font-size="6.2" fill="#333">Scale:</text><text x="2272.2" y="1228.6" font-size="7.8" text-anchor="end">AS NOTED</text><text x="2158.6" y="1241.4" font-size="6.2" fill="#333">Sheet Title:</text><text x="2214" y="1262.4" font-size="17.4" text-anchor="middle" textLength="75" lengthAdjust="spacingAndGlyphs" fill="#111">Building 1</text><text x="2214" y="1280.8" font-size="17.4" text-anchor="middle" textLength="79" lengthAdjust="spacingAndGlyphs" fill="#111">Elevations</text><text x="2158.6" y="1302.6" font-size="6.2" fill="#333">Sheet No.:</text><text x="2213.4" y="1334.8" font-size="24.6" text-anchor="middle" textLength="62.6" lengthAdjust="spacingAndGlyphs" fill="#111">A3.01</text><text x="2288.4" y="1354" font-size="6.5" transform="rotate(-90 2288.4 1354)" fill="#444">3/24/2015 4:41:13 PM</text></g></svg><!--DRAWING_END-->

<!-- ============ LEFT TOOLS ============ -->
<div class="tool" style="left:494px;top:262px;width:60px;height:60px">
  <svg class="abs" style="left:12px;top:12px" width="36" height="36" viewBox="0 0 36 36"><path d="M3 12.5 V3 H12.5 M23.5 3 H33 V12.5 M33 23.5 V33 H23.5 M12.5 33 H3 V23.5" fill="none" stroke="#fff" stroke-width="3.4"/></svg>
</div>
<div class="tool" style="left:494px;top:342px;width:60px;height:120px;overflow:hidden">
  <div class="abs" style="left:0;top:60px;width:60px;height:60px;background:#3d3d3d"></div>
  <div class="abs" style="left:0;top:58.5px;width:60px;height:2px;background:#8d8d8d"></div>
  <svg class="abs" style="left:16px;top:15px" width="28" height="28" viewBox="0 0 28 28"><path d="M14 1.2 V26.8 M1.2 14 H26.8" stroke="#fff" stroke-width="3" stroke-linecap="round" fill="none"/></svg>
  <div class="abs" style="left:19px;top:88px;width:22px;height:3.6px;border-radius:2px;background:#9a9a9a"></div>
</div>
<div class="tool" style="left:494px;top:482px;width:60px;height:420px">
  <!-- pin -->
  <svg class="abs" style="left:14px;top:10px" width="32" height="40" viewBox="0 0 32 40"><path d="M16.5 36.4 C12 29 4.8 22.6 4.8 15.4 A11.7 11.7 0 0 1 28.2 15.4 C28.2 22.6 21 29 16.5 36.4 Z" fill="none" stroke="#fff" stroke-width="2.2" stroke-linejoin="round"/><circle cx="16.5" cy="15.6" r="3.6" fill="#fff"/></svg>
  <!-- link -->
  <svg class="abs" style="left:10px;top:68px" width="40" height="42" viewBox="0 0 40 42"><g transform="translate(20,21.5) rotate(-38)" fill="none" stroke="#fff" stroke-width="2.2"><rect x="-19" y="-5.4" width="15.4" height="10.8" rx="4"/><rect x="3.6" y="-5.4" width="15.4" height="10.8" rx="4"/><path d="M-8 0 H8" stroke-width="2.4" stroke-linecap="round"/></g></svg>
  <!-- pencil -->
  <svg class="abs" style="left:12px;top:132px" width="36" height="36" viewBox="0 0 36 36"><g transform="translate(18,18) rotate(-44.5)" fill="#fff"><path d="M-11.5 -3.6 H11.2 V3.6 H-11.5 Z"/><path d="M12.9 -3.6 H14.6 Q18 -3.6 18 0 Q18 3.6 14.6 3.6 H12.9 Z"/><path d="M-13 -3.4 V3.4 L-20 0 Z"/><path d="M-15.5 -2.1 L-13.2 -3.3 V3.3 L-15.5 2.1Z" fill="#3b3c41"/></g></svg>
  <!-- shapes -->
  <svg class="abs" style="left:12px;top:192px" width="36" height="36" viewBox="0 0 36 36"><path d="M10.2 13.2 A11.2 11.2 0 1 1 23.6 26" fill="none" stroke="#fff" stroke-width="2.2"/><rect x="3.8" y="14.2" width="19" height="18" fill="none" stroke="#fff" stroke-width="2.2" stroke-linejoin="round"/></svg>
  <!-- toolbox -->
  <svg class="abs" style="left:12px;top:254px" width="36" height="30" viewBox="0 0 36 30"><rect x="4.2" y="9.8" width="27.6" height="16.4" rx="2.4" fill="none" stroke="#fff" stroke-width="2.1"/><path d="M11.4 9.8 V7.6 Q11.4 3.6 15.4 3.6 H20.6 Q24.6 3.6 24.6 7.6 V9.8" fill="none" stroke="#fff" stroke-width="2.1"/><path d="M4.2 18.4 H31.8 M11.6 15.6 V21.2 M24.4 15.6 V21.2" stroke="#fff" stroke-width="1.9" fill="none"/></svg>
  <!-- a -->
  <div class="abs" style="left:0;top:296px;width:60px;text-align:center;color:#fff;font-size:47px;line-height:60px;height:60px">a</div>
  <!-- ruler -->
  <svg class="abs" style="left:10px;top:370px" width="40" height="40" viewBox="0 0 40 40"><g transform="translate(20.3,19.7) rotate(-45)" fill="none" stroke="#fff" stroke-width="2.1" stroke-linejoin="round"><rect x="-16" y="-5.6" width="32" height="11.2"/><path d="M-8 5.6 V1.2 M0 5.6 V1.2 M8 5.6 V1.2" stroke-width="1.9"/></g></svg>
</div>
<div class="tool" style="left:494px;top:926px;width:60px;height:60px"><div class="abs" style="left:15px;top:15px;width:30px;height:30px;border-radius:15px;background:#ff0000;border:1.6px solid #fff"></div></div>
<div class="tool" style="left:494px;top:1010px;width:60px;height:120px">
  <svg class="abs" style="left:14px;top:12px" width="32" height="36" viewBox="0 0 32 36"><path d="M5.6 3.4 L28.4 14.6 L18.6 17.8 L24.4 27.2 L20.8 29.4 L15 20 L9 27 Z" fill="#fff"/></svg>
  <svg class="abs" style="left:12px;top:72px" width="36" height="36" viewBox="0 0 36 36"><path d="M7.6 17 A12 12 0 1 1 19 30.6" fill="none" stroke="#fff" stroke-width="2.2" stroke-linecap="round"/><path d="M2.2 14.8 H13.2 L7.6 23 Z" fill="#fff"/></svg>
</div>
<div class="tool" style="left:494px;top:1349px;width:128px;height:65px;background:#3b3c41">
  <div class="abs" style="left:63px;top:0;width:2px;height:65px;background:#000"></div>
  <svg class="abs" style="left:24px;top:23px" width="14" height="20" viewBox="0 0 14 20"><path d="M12 1.6 V18.4 L2 10 Z" fill="#fff"/></svg>
  <svg class="abs" style="left:90px;top:23px" width="14" height="20" viewBox="0 0 14 20"><path d="M2 1.6 V18.4 L12 10 Z" fill="#fff"/></svg>
</div>

<!-- ============ RIGHT TOOLS ============ -->
<div class="tool" style="left:2382px;top:262px;width:60px;height:60px">
  <svg class="abs" style="left:10px;top:10px" width="40" height="40" viewBox="0 0 40 40"><circle cx="17.2" cy="16.9" r="11.4" fill="none" stroke="#fff" stroke-width="3.3"/><path d="M25.6 25.2 L34.6 33.2" stroke="#fff" stroke-width="3.6" stroke-linecap="round"/></svg>
</div>
<div class="tool" style="left:2382px;top:402px;width:60px;height:60px">
  <svg class="abs" style="left:10px;top:14px" width="40" height="32" viewBox="0 0 40 32"><path d="M2.2 16.2 Q11 2.4 20 2.4 Q29 2.4 37.8 16.2 Q29 30 20 30 Q11 30 2.2 16.2 Z" fill="none" stroke="#fff" stroke-width="2.5" stroke-linejoin="round"/><circle cx="19.4" cy="16.2" r="6.9" fill="none" stroke="#fff" stroke-width="2.4"/><path d="M19.4 12.8 A3.4 3.4 0 1 0 22.8 16.2 A2.4 2.4 0 0 1 19.4 12.8 Z" fill="#fff"/></svg>
</div>

<!-- tooltip + crosshair -->
<svg class="abs" style="left:1214px;top:632px" width="32" height="32" viewBox="0 0 32 32"><path d="M15.6 2 V29.8 M2 15.8 H29.2" stroke="#111" stroke-width="2" fill="none"/></svg>
<div class="abs" style="left:1280px;top:622px;width:230px;height:56px;border-radius:7px;background:#3c3c3c;color:#fff;font-size:23.5px;line-height:56px;white-space:nowrap"><span class="abs" style="left:17px;top:0.5px">Click to view in 3D</span></div>
<svg class="abs" style="left:1267px;top:637px" width="14" height="26" viewBox="0 0 14 26"><path d="M14 0.6 L1 13 L14 25.4 Z" fill="#3c3c3c"/></svg>

<!-- bottom bars -->
<div class="abs" style="left:1251px;top:1349px;width:464px;height:65px;border-radius:7px;background:rgba(38,39,44,0.9);color:#fff;font-size:25.2px;line-height:64px;white-space:nowrap">
  <span class="abs" style="left:44.7px;top:1.2px;font-size:26.5px;transform:scaleX(0.957);transform-origin:0 50%">A3.01 - Building 1 Elevations</span>
  <div class="abs" style="left:403px;top:9px;width:2.4px;height:50px;background:#050505"></div>
  <svg class="abs" style="left:416px;top:18px" width="30" height="30" viewBox="0 0 30 30"><g transform="translate(14.4,14.6) rotate(-45)" fill="#fff"><path d="M-10.6 -4 H7.4 V4 H-10.6 Z"/><path d="M9 -4 H11.6 Q15.6 -4 15.6 0 Q15.6 4 11.6 4 H9 Z"/><path d="M-12 -3.9 V3.9 L-19.2 0 Z"/></g><path d="M5.2 21.6 L8.4 24.8" stroke="#38393d" stroke-width="1.6"/></svg>
</div>
<div class="abs" style="left:2170px;top:1349px;width:272px;height:65px;border-radius:7px;background:rgba(38,39,44,0.9);color:#fff;font-size:27px;line-height:64px;white-space:nowrap">
  <span class="abs" style="left:43px;top:0.5px">2022-11-08</span>
  <div class="abs" style="left:209px;top:7px;width:2.4px;height:52px;background:#050505"></div>
  <svg class="abs" style="left:231px;top:29px" width="18" height="10" viewBox="0 0 18 10"><path d="M0.6 0.4 H17.4 L9 9.6 Z" fill="#fff"/></svg>
</div>

<!-- ============ TASKS PANEL ============ -->
<div class="abs" style="left:2494px;top:250px;width:414px;text-align:center;font-weight:bold;font-size:25.5px;line-height:36px;color:#35363a;letter-spacing:-1.3px;margin-top:1px">Tasks</div>
<div class="abs" style="left:2494px;top:297px;width:414px;height:2px;background:#cfd0d6"></div>
<div class="abs" style="left:2494px;top:325px;width:414px;text-align:center;font-size:26.5px;line-height:36px;color:#9a9b9e;transform:scaleX(0.956)">+ New task</div>

<!-- ============ RED ANNOTATION ============ -->
<svg class="abs" style="left:0;top:0" width="2940" height="1468" viewBox="0 0 2940 1468">
  <defs>
    <filter id="sh" x="-10%" y="-10%" width="120%" height="130%"><feGaussianBlur in="SourceAlpha" stdDeviation="3"/><feOffset dx="0" dy="4.5" result="o"/><feComponentTransfer><feFuncA type="linear" slope="0.55"/></feComponentTransfer><feMerge><feMergeNode/><feMergeNode in="SourceGraphic"/></feMerge></filter>
    <linearGradient id="ins" x1="0" y1="0" x2="0" y2="1"><stop offset="0" stop-color="#1d2b55" stop-opacity="0.95"/><stop offset="1" stop-color="#1d2b55" stop-opacity="0"/></linearGradient>
  </defs>
  <!-- blue 3D button inside box -->
  <rect x="2381" y="320" width="62" height="54" fill="#6596ff"/>
  <rect x="2381" y="320" width="62" height="7" fill="url(#ins)"/>
  <rect x="2381" y="320" width="1" height="54" fill="#7f8796"/><rect x="2442" y="320" width="1.2" height="54" fill="#7f8796"/>
  <g fill="none" stroke="#fff" stroke-width="2.6" stroke-linejoin="round"><path d="M2412 336 L2426 343.6 V360.4 L2412 368 L2398 360.4 V343.6 Z"/><path d="M2398.6 344 L2412 351.4 L2425.4 344 M2412 351.4 V367.6"/></g>
  <g filter="url(#sh)">
    <path d="M2369.5 309.5 H2454.5 V384 H2369.5 Z M2381 320.6 V373.6 H2443.2 V320.6 Z" fill="#fc5a4c" fill-rule="evenodd"/>
    <path d="M2032.2 135.6 A7.6 7.6 0 0 1 2040.6 135.2 L2323.6 322 L2324.4 309 L2347.6 349.4 L2300.6 343.6 L2314 337 L2031.8 148.4 A7.6 7.6 0 0 1 2032.2 135.6 Z" fill="#fc5a4c"/>
  </g>
</svg>

<!-- bottom shadow + window corners -->
<div class="abs" style="left:0;top:0;width:2940px;height:1468px;overflow:hidden;pointer-events:none"><div class="abs" style="left:800px;top:1500px;width:1350px;height:40px;border-radius:20px;box-shadow:0 0 60px 20px rgba(0,0,0,0.4)"></div></div>

<svg class="abs" style="left:0;top:1448px" width="20" height="20" viewBox="0 0 20 20"><path d="M0 0 V20 H20 Q0 20 0 0 Z" fill="#151b15"/><path d="M1 0 Q1 19 20 19" fill="none" stroke="#5a5b5d" stroke-width="2"/></svg>
<svg class="abs" style="left:2916px;top:1444px" width="24" height="24" viewBox="0 0 24 24"><path d="M24 0 V24 H0 Q24 24 24 0 Z" fill="#0d1110"/><path d="M23.6 0 Q23.6 23.6 0 23.6" fill="none" stroke="#fbfbfc" stroke-width="1.2"/></svg>
</body>
</html>
